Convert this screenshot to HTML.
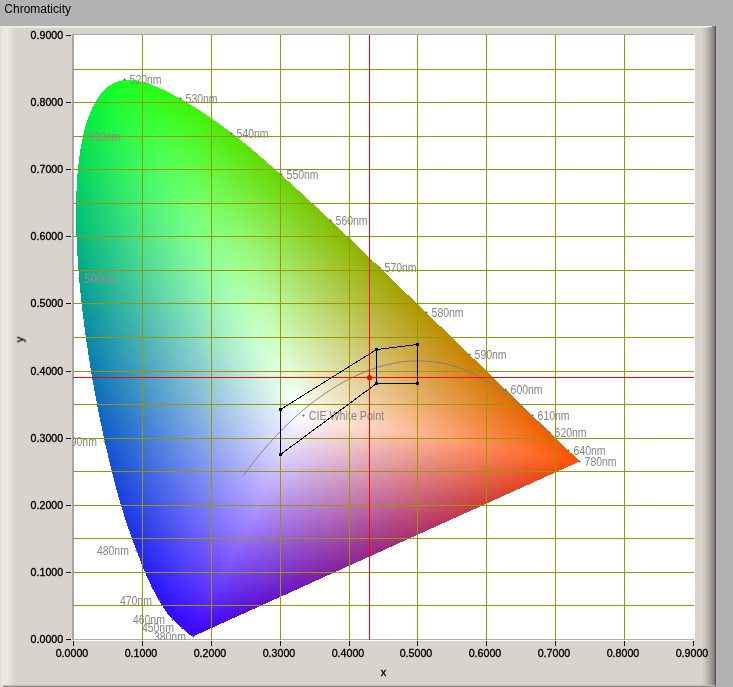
<!DOCTYPE html>
<html><head><meta charset="utf-8"><title>Chromaticity</title>
<style>html,body{margin:0;padding:0;background:#b2b2b2}body{width:733px;height:687px;overflow:hidden;position:relative;font-family:"Liberation Sans",sans-serif}</style></head>
<body>
<svg width="733" height="687" viewBox="0 0 733 687" style="position:absolute;left:0;top:0;display:block">
<defs>
<linearGradient id="gl" x1="0" x2="1" y1="0" y2="0"><stop offset="0" stop-color="#dcd8ce"/><stop offset="0.1" stop-color="#e9e5da"/><stop offset="0.25" stop-color="#ece8de"/><stop offset="0.55" stop-color="#ebe7de"/><stop offset="0.8" stop-color="#e2ded4"/><stop offset="1" stop-color="#d8d4cd"/></linearGradient>
<linearGradient id="gr" x1="0" x2="1" y1="0" y2="0"><stop offset="0" stop-color="#d8d4cd"/><stop offset="0.3" stop-color="#c2bfb8"/><stop offset="0.62" stop-color="#a3a099"/><stop offset="0.85" stop-color="#84827c"/><stop offset="0.93" stop-color="#6a6862"/><stop offset="1" stop-color="#4c4a46"/></linearGradient>
<linearGradient id="b0" gradientUnits="userSpaceOnUse" x1="305.42" y1="416.97" x2="300.84" y2="414.63"><stop offset="0" stop-color="#3c02fd"/><stop offset="1" stop-color="#3a03fe"/></linearGradient>
<linearGradient id="w0" gradientUnits="userSpaceOnUse" x1="303.13" y1="415.80" x2="200.08" y2="639.23"><stop offset="0" stop-color="#fff" stop-opacity="1"/><stop offset="1" stop-color="#fff" stop-opacity="0"/></linearGradient>
<linearGradient id="b1" gradientUnits="userSpaceOnUse" x1="305.29" y1="416.95" x2="300.97" y2="414.64"><stop offset="0" stop-color="#3a03fe"/><stop offset="1" stop-color="#3804ff"/></linearGradient>
<linearGradient id="w1" gradientUnits="userSpaceOnUse" x1="303.13" y1="415.80" x2="144.79" y2="595.20"><stop offset="0" stop-color="#fff" stop-opacity="1"/><stop offset="1" stop-color="#fff" stop-opacity="0"/></linearGradient>
<linearGradient id="b2" gradientUnits="userSpaceOnUse" x1="305.55" y1="417.16" x2="300.71" y2="414.43"><stop offset="0" stop-color="#3804ff"/><stop offset="1" stop-color="#3606ff"/></linearGradient>
<linearGradient id="w2" gradientUnits="userSpaceOnUse" x1="303.13" y1="415.80" x2="147.25" y2="598.47"><stop offset="0" stop-color="#fff" stop-opacity="1"/><stop offset="1" stop-color="#fff" stop-opacity="0"/></linearGradient>
<linearGradient id="b3" gradientUnits="userSpaceOnUse" x1="305.42" y1="417.16" x2="300.84" y2="414.43"><stop offset="0" stop-color="#3606ff"/><stop offset="1" stop-color="#3407ff"/></linearGradient>
<linearGradient id="w3" gradientUnits="userSpaceOnUse" x1="303.13" y1="415.80" x2="144.96" y2="595.57"><stop offset="0" stop-color="#fff" stop-opacity="1"/><stop offset="1" stop-color="#fff" stop-opacity="0"/></linearGradient>
<linearGradient id="b4" gradientUnits="userSpaceOnUse" x1="305.42" y1="417.22" x2="300.84" y2="414.37"><stop offset="0" stop-color="#3407ff"/><stop offset="1" stop-color="#3209ff"/></linearGradient>
<linearGradient id="w4" gradientUnits="userSpaceOnUse" x1="303.13" y1="415.80" x2="137.49" y2="585.16"><stop offset="0" stop-color="#fff" stop-opacity="1"/><stop offset="1" stop-color="#fff" stop-opacity="0"/></linearGradient>
<linearGradient id="b5" gradientUnits="userSpaceOnUse" x1="305.90" y1="417.62" x2="300.36" y2="413.97"><stop offset="0" stop-color="#3209ff"/><stop offset="1" stop-color="#300bff"/></linearGradient>
<linearGradient id="w5" gradientUnits="userSpaceOnUse" x1="303.13" y1="415.80" x2="128.51" y2="569.35"><stop offset="0" stop-color="#fff" stop-opacity="1"/><stop offset="1" stop-color="#fff" stop-opacity="0"/></linearGradient>
<linearGradient id="b6" gradientUnits="userSpaceOnUse" x1="305.85" y1="417.70" x2="300.41" y2="413.89"><stop offset="0" stop-color="#300bff"/><stop offset="1" stop-color="#2e0efe"/></linearGradient>
<linearGradient id="w6" gradientUnits="userSpaceOnUse" x1="303.13" y1="415.80" x2="120.31" y2="548.54"><stop offset="0" stop-color="#fff" stop-opacity="1"/><stop offset="1" stop-color="#fff" stop-opacity="0"/></linearGradient>
<linearGradient id="b7" gradientUnits="userSpaceOnUse" x1="305.39" y1="417.47" x2="300.87" y2="414.13"><stop offset="0" stop-color="#2e0efe"/><stop offset="1" stop-color="#2c10fd"/></linearGradient>
<linearGradient id="w7" gradientUnits="userSpaceOnUse" x1="303.13" y1="415.80" x2="116.84" y2="535.05"><stop offset="0" stop-color="#fff" stop-opacity="1"/><stop offset="1" stop-color="#fff" stop-opacity="0"/></linearGradient>
<linearGradient id="b8" gradientUnits="userSpaceOnUse" x1="305.73" y1="417.83" x2="300.53" y2="413.77"><stop offset="0" stop-color="#2c10fd"/><stop offset="1" stop-color="#2a13fc"/></linearGradient>
<linearGradient id="w8" gradientUnits="userSpaceOnUse" x1="303.13" y1="415.80" x2="115.11" y2="525.20"><stop offset="0" stop-color="#fff" stop-opacity="1"/><stop offset="1" stop-color="#fff" stop-opacity="0"/></linearGradient>
<linearGradient id="b9" gradientUnits="userSpaceOnUse" x1="306.10" y1="418.26" x2="300.16" y2="413.33"><stop offset="0" stop-color="#2a13fc"/><stop offset="1" stop-color="#2817fa"/></linearGradient>
<linearGradient id="w9" gradientUnits="userSpaceOnUse" x1="303.13" y1="415.80" x2="113.98" y2="515.78"><stop offset="0" stop-color="#fff" stop-opacity="1"/><stop offset="1" stop-color="#fff" stop-opacity="0"/></linearGradient>
<linearGradient id="b10" gradientUnits="userSpaceOnUse" x1="306.53" y1="418.84" x2="299.73" y2="412.75"><stop offset="0" stop-color="#2817fa"/><stop offset="1" stop-color="#261bf8"/></linearGradient>
<linearGradient id="w10" gradientUnits="userSpaceOnUse" x1="303.13" y1="415.80" x2="113.34" y2="507.07"><stop offset="0" stop-color="#fff" stop-opacity="1"/><stop offset="1" stop-color="#fff" stop-opacity="0"/></linearGradient>
<linearGradient id="b11" gradientUnits="userSpaceOnUse" x1="305.01" y1="417.59" x2="301.25" y2="414.00"><stop offset="0" stop-color="#261bf8"/><stop offset="1" stop-color="#251df7"/></linearGradient>
<linearGradient id="w11" gradientUnits="userSpaceOnUse" x1="303.13" y1="415.80" x2="113.04" y2="500.90"><stop offset="0" stop-color="#fff" stop-opacity="1"/><stop offset="1" stop-color="#fff" stop-opacity="0"/></linearGradient>
<linearGradient id="b12" gradientUnits="userSpaceOnUse" x1="305.13" y1="417.80" x2="301.12" y2="413.79"><stop offset="0" stop-color="#251df7"/><stop offset="1" stop-color="#241ff5"/></linearGradient>
<linearGradient id="w12" gradientUnits="userSpaceOnUse" x1="303.13" y1="415.80" x2="112.93" y2="497.01"><stop offset="0" stop-color="#fff" stop-opacity="1"/><stop offset="1" stop-color="#fff" stop-opacity="0"/></linearGradient>
<linearGradient id="b13" gradientUnits="userSpaceOnUse" x1="305.26" y1="418.04" x2="301.00" y2="413.55"><stop offset="0" stop-color="#241ff5"/><stop offset="1" stop-color="#2222f3"/></linearGradient>
<linearGradient id="w13" gradientUnits="userSpaceOnUse" x1="303.13" y1="415.80" x2="112.87" y2="493.72"><stop offset="0" stop-color="#fff" stop-opacity="1"/><stop offset="1" stop-color="#fff" stop-opacity="0"/></linearGradient>
<linearGradient id="b14" gradientUnits="userSpaceOnUse" x1="305.37" y1="418.31" x2="300.89" y2="413.29"><stop offset="0" stop-color="#2222f3"/><stop offset="1" stop-color="#2125f2"/></linearGradient>
<linearGradient id="w14" gradientUnits="userSpaceOnUse" x1="303.13" y1="415.80" x2="112.81" y2="490.96"><stop offset="0" stop-color="#fff" stop-opacity="1"/><stop offset="1" stop-color="#fff" stop-opacity="0"/></linearGradient>
<linearGradient id="b15" gradientUnits="userSpaceOnUse" x1="305.47" y1="418.60" x2="300.78" y2="412.99"><stop offset="0" stop-color="#2125f2"/><stop offset="1" stop-color="#2029ef"/></linearGradient>
<linearGradient id="w15" gradientUnits="userSpaceOnUse" x1="303.13" y1="415.80" x2="112.75" y2="488.66"><stop offset="0" stop-color="#fff" stop-opacity="1"/><stop offset="1" stop-color="#fff" stop-opacity="0"/></linearGradient>
<linearGradient id="b16" gradientUnits="userSpaceOnUse" x1="305.56" y1="418.93" x2="300.69" y2="412.66"><stop offset="0" stop-color="#2029ef"/><stop offset="1" stop-color="#1e2ced"/></linearGradient>
<linearGradient id="w16" gradientUnits="userSpaceOnUse" x1="303.13" y1="415.80" x2="112.66" y2="486.68"><stop offset="0" stop-color="#fff" stop-opacity="1"/><stop offset="1" stop-color="#fff" stop-opacity="0"/></linearGradient>
<linearGradient id="b17" gradientUnits="userSpaceOnUse" x1="305.64" y1="419.30" x2="300.62" y2="412.30"><stop offset="0" stop-color="#1e2ced"/><stop offset="1" stop-color="#1d30eb"/></linearGradient>
<linearGradient id="w17" gradientUnits="userSpaceOnUse" x1="303.13" y1="415.80" x2="112.53" y2="484.44"><stop offset="0" stop-color="#fff" stop-opacity="1"/><stop offset="1" stop-color="#fff" stop-opacity="0"/></linearGradient>
<linearGradient id="b18" gradientUnits="userSpaceOnUse" x1="305.68" y1="419.70" x2="300.58" y2="411.89"><stop offset="0" stop-color="#1d30eb"/><stop offset="1" stop-color="#1b34e8"/></linearGradient>
<linearGradient id="w18" gradientUnits="userSpaceOnUse" x1="303.13" y1="415.80" x2="112.32" y2="481.74"><stop offset="0" stop-color="#fff" stop-opacity="1"/><stop offset="1" stop-color="#fff" stop-opacity="0"/></linearGradient>
<linearGradient id="b19" gradientUnits="userSpaceOnUse" x1="305.69" y1="420.14" x2="300.57" y2="411.45"><stop offset="0" stop-color="#1b34e8"/><stop offset="1" stop-color="#1939e5"/></linearGradient>
<linearGradient id="w19" gradientUnits="userSpaceOnUse" x1="303.13" y1="415.80" x2="112.02" y2="478.61"><stop offset="0" stop-color="#fff" stop-opacity="1"/><stop offset="1" stop-color="#fff" stop-opacity="0"/></linearGradient>
<linearGradient id="b20" gradientUnits="userSpaceOnUse" x1="305.64" y1="420.60" x2="300.62" y2="410.99"><stop offset="0" stop-color="#1939e5"/><stop offset="1" stop-color="#183de1"/></linearGradient>
<linearGradient id="w20" gradientUnits="userSpaceOnUse" x1="303.13" y1="415.80" x2="111.63" y2="475.07"><stop offset="0" stop-color="#fff" stop-opacity="1"/><stop offset="1" stop-color="#fff" stop-opacity="0"/></linearGradient>
<linearGradient id="b21" gradientUnits="userSpaceOnUse" x1="305.52" y1="421.07" x2="300.74" y2="410.53"><stop offset="0" stop-color="#183de1"/><stop offset="1" stop-color="#1643de"/></linearGradient>
<linearGradient id="w21" gradientUnits="userSpaceOnUse" x1="303.13" y1="415.80" x2="111.14" y2="471.26"><stop offset="0" stop-color="#fff" stop-opacity="1"/><stop offset="1" stop-color="#fff" stop-opacity="0"/></linearGradient>
<linearGradient id="b22" gradientUnits="userSpaceOnUse" x1="305.33" y1="421.54" x2="300.93" y2="410.05"><stop offset="0" stop-color="#1643de"/><stop offset="1" stop-color="#1548da"/></linearGradient>
<linearGradient id="w22" gradientUnits="userSpaceOnUse" x1="303.13" y1="415.80" x2="110.62" y2="467.76"><stop offset="0" stop-color="#fff" stop-opacity="1"/><stop offset="1" stop-color="#fff" stop-opacity="0"/></linearGradient>
<linearGradient id="b23" gradientUnits="userSpaceOnUse" x1="305.07" y1="422.01" x2="301.19" y2="409.58"><stop offset="0" stop-color="#1548da"/><stop offset="1" stop-color="#134ed5"/></linearGradient>
<linearGradient id="w23" gradientUnits="userSpaceOnUse" x1="303.13" y1="415.80" x2="110.08" y2="464.70"><stop offset="0" stop-color="#fff" stop-opacity="1"/><stop offset="1" stop-color="#fff" stop-opacity="0"/></linearGradient>
<linearGradient id="b24" gradientUnits="userSpaceOnUse" x1="304.73" y1="422.47" x2="301.53" y2="409.12"><stop offset="0" stop-color="#134ed5"/><stop offset="1" stop-color="#1154d1"/></linearGradient>
<linearGradient id="w24" gradientUnits="userSpaceOnUse" x1="303.13" y1="415.80" x2="109.51" y2="462.07"><stop offset="0" stop-color="#fff" stop-opacity="1"/><stop offset="1" stop-color="#fff" stop-opacity="0"/></linearGradient>
<linearGradient id="b25" gradientUnits="userSpaceOnUse" x1="304.31" y1="422.90" x2="301.95" y2="408.69"><stop offset="0" stop-color="#1154d1"/><stop offset="1" stop-color="#105acc"/></linearGradient>
<linearGradient id="w25" gradientUnits="userSpaceOnUse" x1="303.13" y1="415.80" x2="108.94" y2="459.90"><stop offset="0" stop-color="#fff" stop-opacity="1"/><stop offset="1" stop-color="#fff" stop-opacity="0"/></linearGradient>
<linearGradient id="b26" gradientUnits="userSpaceOnUse" x1="303.82" y1="423.26" x2="302.44" y2="408.33"><stop offset="0" stop-color="#105acc"/><stop offset="1" stop-color="#0e61c6"/></linearGradient>
<linearGradient id="w26" gradientUnits="userSpaceOnUse" x1="303.13" y1="415.80" x2="108.31" y2="457.91"><stop offset="0" stop-color="#fff" stop-opacity="1"/><stop offset="1" stop-color="#fff" stop-opacity="0"/></linearGradient>
<linearGradient id="b27" gradientUnits="userSpaceOnUse" x1="303.25" y1="423.51" x2="303.00" y2="408.08"><stop offset="0" stop-color="#0e61c6"/><stop offset="1" stop-color="#0d68c0"/></linearGradient>
<linearGradient id="w27" gradientUnits="userSpaceOnUse" x1="303.13" y1="415.80" x2="107.50" y2="455.77"><stop offset="0" stop-color="#fff" stop-opacity="1"/><stop offset="1" stop-color="#fff" stop-opacity="0"/></linearGradient>
<linearGradient id="b28" gradientUnits="userSpaceOnUse" x1="302.66" y1="423.63" x2="303.60" y2="407.96"><stop offset="0" stop-color="#0d68c0"/><stop offset="1" stop-color="#0b6fbb"/></linearGradient>
<linearGradient id="w28" gradientUnits="userSpaceOnUse" x1="303.13" y1="415.80" x2="106.55" y2="453.59"><stop offset="0" stop-color="#fff" stop-opacity="1"/><stop offset="1" stop-color="#fff" stop-opacity="0"/></linearGradient>
<linearGradient id="b29" gradientUnits="userSpaceOnUse" x1="302.07" y1="423.61" x2="304.19" y2="407.98"><stop offset="0" stop-color="#0b6fbb"/><stop offset="1" stop-color="#0a77b4"/></linearGradient>
<linearGradient id="w29" gradientUnits="userSpaceOnUse" x1="303.13" y1="415.80" x2="105.43" y2="451.36"><stop offset="0" stop-color="#fff" stop-opacity="1"/><stop offset="1" stop-color="#fff" stop-opacity="0"/></linearGradient>
<linearGradient id="b30" gradientUnits="userSpaceOnUse" x1="301.50" y1="423.47" x2="304.76" y2="408.12"><stop offset="0" stop-color="#0a77b4"/><stop offset="1" stop-color="#087eae"/></linearGradient>
<linearGradient id="w30" gradientUnits="userSpaceOnUse" x1="303.13" y1="415.80" x2="104.12" y2="449.05"><stop offset="0" stop-color="#fff" stop-opacity="1"/><stop offset="1" stop-color="#fff" stop-opacity="0"/></linearGradient>
<linearGradient id="b31" gradientUnits="userSpaceOnUse" x1="301.00" y1="423.22" x2="305.26" y2="408.37"><stop offset="0" stop-color="#087eae"/><stop offset="1" stop-color="#0786a7"/></linearGradient>
<linearGradient id="w31" gradientUnits="userSpaceOnUse" x1="303.13" y1="415.80" x2="102.60" y2="446.65"><stop offset="0" stop-color="#fff" stop-opacity="1"/><stop offset="1" stop-color="#fff" stop-opacity="0"/></linearGradient>
<linearGradient id="b32" gradientUnits="userSpaceOnUse" x1="300.56" y1="422.90" x2="305.70" y2="408.70"><stop offset="0" stop-color="#0786a7"/><stop offset="1" stop-color="#068ea1"/></linearGradient>
<linearGradient id="w32" gradientUnits="userSpaceOnUse" x1="303.13" y1="415.80" x2="100.85" y2="444.11"><stop offset="0" stop-color="#fff" stop-opacity="1"/><stop offset="1" stop-color="#fff" stop-opacity="0"/></linearGradient>
<linearGradient id="b33" gradientUnits="userSpaceOnUse" x1="300.20" y1="422.53" x2="306.06" y2="409.06"><stop offset="0" stop-color="#068ea1"/><stop offset="1" stop-color="#05959a"/></linearGradient>
<linearGradient id="w33" gradientUnits="userSpaceOnUse" x1="303.13" y1="415.80" x2="98.83" y2="441.42"><stop offset="0" stop-color="#fff" stop-opacity="1"/><stop offset="1" stop-color="#fff" stop-opacity="0"/></linearGradient>
<linearGradient id="b34" gradientUnits="userSpaceOnUse" x1="299.91" y1="422.14" x2="306.35" y2="409.45"><stop offset="0" stop-color="#05959a"/><stop offset="1" stop-color="#049d93"/></linearGradient>
<linearGradient id="w34" gradientUnits="userSpaceOnUse" x1="303.13" y1="415.80" x2="96.56" y2="438.58"><stop offset="0" stop-color="#fff" stop-opacity="1"/><stop offset="1" stop-color="#fff" stop-opacity="0"/></linearGradient>
<linearGradient id="b35" gradientUnits="userSpaceOnUse" x1="299.69" y1="421.74" x2="306.57" y2="409.85"><stop offset="0" stop-color="#049d93"/><stop offset="1" stop-color="#03a58c"/></linearGradient>
<linearGradient id="w35" gradientUnits="userSpaceOnUse" x1="303.13" y1="415.80" x2="94.03" y2="435.59"><stop offset="0" stop-color="#fff" stop-opacity="1"/><stop offset="1" stop-color="#fff" stop-opacity="0"/></linearGradient>
<linearGradient id="b36" gradientUnits="userSpaceOnUse" x1="299.54" y1="421.32" x2="306.71" y2="410.28"><stop offset="0" stop-color="#03a58c"/><stop offset="1" stop-color="#02ac85"/></linearGradient>
<linearGradient id="w36" gradientUnits="userSpaceOnUse" x1="303.13" y1="415.80" x2="91.23" y2="432.42"><stop offset="0" stop-color="#fff" stop-opacity="1"/><stop offset="1" stop-color="#fff" stop-opacity="0"/></linearGradient>
<linearGradient id="b37" gradientUnits="userSpaceOnUse" x1="299.47" y1="420.89" x2="306.79" y2="410.70"><stop offset="0" stop-color="#02ac85"/><stop offset="1" stop-color="#02b47e"/></linearGradient>
<linearGradient id="w37" gradientUnits="userSpaceOnUse" x1="303.13" y1="415.80" x2="87.88" y2="428.75"><stop offset="0" stop-color="#fff" stop-opacity="1"/><stop offset="1" stop-color="#fff" stop-opacity="0"/></linearGradient>
<linearGradient id="b38" gradientUnits="userSpaceOnUse" x1="299.44" y1="420.48" x2="306.82" y2="411.11"><stop offset="0" stop-color="#02b47e"/><stop offset="1" stop-color="#01bb77"/></linearGradient>
<linearGradient id="w38" gradientUnits="userSpaceOnUse" x1="303.13" y1="415.80" x2="83.89" y2="424.41"><stop offset="0" stop-color="#fff" stop-opacity="1"/><stop offset="1" stop-color="#fff" stop-opacity="0"/></linearGradient>
<linearGradient id="b39" gradientUnits="userSpaceOnUse" x1="299.44" y1="420.12" x2="306.82" y2="411.47"><stop offset="0" stop-color="#01bb77"/><stop offset="1" stop-color="#01c270"/></linearGradient>
<linearGradient id="w39" gradientUnits="userSpaceOnUse" x1="303.13" y1="415.80" x2="79.23" y2="419.32"><stop offset="0" stop-color="#fff" stop-opacity="1"/><stop offset="1" stop-color="#fff" stop-opacity="0"/></linearGradient>
<linearGradient id="b40" gradientUnits="userSpaceOnUse" x1="299.45" y1="419.81" x2="306.81" y2="411.79"><stop offset="0" stop-color="#01c270"/><stop offset="1" stop-color="#01c869"/></linearGradient>
<linearGradient id="w40" gradientUnits="userSpaceOnUse" x1="303.13" y1="415.80" x2="73.93" y2="413.40"><stop offset="0" stop-color="#fff" stop-opacity="1"/><stop offset="1" stop-color="#fff" stop-opacity="0"/></linearGradient>
<linearGradient id="b41" gradientUnits="userSpaceOnUse" x1="299.46" y1="419.53" x2="306.80" y2="412.06"><stop offset="0" stop-color="#01c869"/><stop offset="1" stop-color="#02cf63"/></linearGradient>
<linearGradient id="w41" gradientUnits="userSpaceOnUse" x1="303.13" y1="415.80" x2="68.23" y2="406.79"><stop offset="0" stop-color="#fff" stop-opacity="1"/><stop offset="1" stop-color="#fff" stop-opacity="0"/></linearGradient>
<linearGradient id="b42" gradientUnits="userSpaceOnUse" x1="299.49" y1="419.27" x2="306.76" y2="412.33"><stop offset="0" stop-color="#02cf63"/><stop offset="1" stop-color="#02d55c"/></linearGradient>
<linearGradient id="w42" gradientUnits="userSpaceOnUse" x1="303.13" y1="415.80" x2="61.93" y2="399.08"><stop offset="0" stop-color="#fff" stop-opacity="1"/><stop offset="1" stop-color="#fff" stop-opacity="0"/></linearGradient>
<linearGradient id="b43" gradientUnits="userSpaceOnUse" x1="299.55" y1="419.02" x2="306.71" y2="412.57"><stop offset="0" stop-color="#02d55c"/><stop offset="1" stop-color="#03db55"/></linearGradient>
<linearGradient id="w43" gradientUnits="userSpaceOnUse" x1="303.13" y1="415.80" x2="54.70" y2="389.56"><stop offset="0" stop-color="#fff" stop-opacity="1"/><stop offset="1" stop-color="#fff" stop-opacity="0"/></linearGradient>
<linearGradient id="b44" gradientUnits="userSpaceOnUse" x1="299.61" y1="418.79" x2="306.64" y2="412.81"><stop offset="0" stop-color="#03db55"/><stop offset="1" stop-color="#04e04f"/></linearGradient>
<linearGradient id="w44" gradientUnits="userSpaceOnUse" x1="303.13" y1="415.80" x2="46.58" y2="377.69"><stop offset="0" stop-color="#fff" stop-opacity="1"/><stop offset="1" stop-color="#fff" stop-opacity="0"/></linearGradient>
<linearGradient id="b45" gradientUnits="userSpaceOnUse" x1="299.70" y1="418.57" x2="306.56" y2="413.03"><stop offset="0" stop-color="#04e04f"/><stop offset="1" stop-color="#05e549"/></linearGradient>
<linearGradient id="w45" gradientUnits="userSpaceOnUse" x1="303.13" y1="415.80" x2="37.73" y2="362.74"><stop offset="0" stop-color="#fff" stop-opacity="1"/><stop offset="1" stop-color="#fff" stop-opacity="0"/></linearGradient>
<linearGradient id="b46" gradientUnits="userSpaceOnUse" x1="299.79" y1="418.36" x2="306.47" y2="413.23"><stop offset="0" stop-color="#05e549"/><stop offset="1" stop-color="#06ea43"/></linearGradient>
<linearGradient id="w46" gradientUnits="userSpaceOnUse" x1="303.13" y1="415.80" x2="28.96" y2="344.72"><stop offset="0" stop-color="#fff" stop-opacity="1"/><stop offset="1" stop-color="#fff" stop-opacity="0"/></linearGradient>
<linearGradient id="b47" gradientUnits="userSpaceOnUse" x1="299.88" y1="418.17" x2="306.38" y2="413.42"><stop offset="0" stop-color="#06ea43"/><stop offset="1" stop-color="#08ee3d"/></linearGradient>
<linearGradient id="w47" gradientUnits="userSpaceOnUse" x1="303.13" y1="415.80" x2="20.95" y2="323.26"><stop offset="0" stop-color="#fff" stop-opacity="1"/><stop offset="1" stop-color="#fff" stop-opacity="0"/></linearGradient>
<linearGradient id="b48" gradientUnits="userSpaceOnUse" x1="300.00" y1="417.99" x2="306.26" y2="413.61"><stop offset="0" stop-color="#08ee3d"/><stop offset="1" stop-color="#09f238"/></linearGradient>
<linearGradient id="w48" gradientUnits="userSpaceOnUse" x1="303.13" y1="415.80" x2="14.33" y2="296.28"><stop offset="0" stop-color="#fff" stop-opacity="1"/><stop offset="1" stop-color="#fff" stop-opacity="0"/></linearGradient>
<linearGradient id="b49" gradientUnits="userSpaceOnUse" x1="300.13" y1="417.81" x2="306.13" y2="413.79"><stop offset="0" stop-color="#09f238"/><stop offset="1" stop-color="#0bf633"/></linearGradient>
<linearGradient id="w49" gradientUnits="userSpaceOnUse" x1="303.13" y1="415.80" x2="11.13" y2="262.16"><stop offset="0" stop-color="#fff" stop-opacity="1"/><stop offset="1" stop-color="#fff" stop-opacity="0"/></linearGradient>
<linearGradient id="b50" gradientUnits="userSpaceOnUse" x1="300.27" y1="417.64" x2="305.99" y2="413.96"><stop offset="0" stop-color="#0bf633"/><stop offset="1" stop-color="#0df82e"/></linearGradient>
<linearGradient id="w50" gradientUnits="userSpaceOnUse" x1="303.13" y1="415.80" x2="15.08" y2="219.62"><stop offset="0" stop-color="#fff" stop-opacity="1"/><stop offset="1" stop-color="#fff" stop-opacity="0"/></linearGradient>
<linearGradient id="b51" gradientUnits="userSpaceOnUse" x1="300.41" y1="417.48" x2="305.85" y2="414.11"><stop offset="0" stop-color="#0df82e"/><stop offset="1" stop-color="#10fb2a"/></linearGradient>
<linearGradient id="w51" gradientUnits="userSpaceOnUse" x1="303.13" y1="415.80" x2="31.44" y2="170.89"><stop offset="0" stop-color="#fff" stop-opacity="1"/><stop offset="1" stop-color="#fff" stop-opacity="0"/></linearGradient>
<linearGradient id="b52" gradientUnits="userSpaceOnUse" x1="300.54" y1="417.34" x2="305.72" y2="414.25"><stop offset="0" stop-color="#10fb2a"/><stop offset="1" stop-color="#12fc26"/></linearGradient>
<linearGradient id="w52" gradientUnits="userSpaceOnUse" x1="303.13" y1="415.80" x2="63.24" y2="123.66"><stop offset="0" stop-color="#fff" stop-opacity="1"/><stop offset="1" stop-color="#fff" stop-opacity="0"/></linearGradient>
<linearGradient id="b53" gradientUnits="userSpaceOnUse" x1="300.66" y1="417.22" x2="305.60" y2="414.37"><stop offset="0" stop-color="#12fc26"/><stop offset="1" stop-color="#15fe22"/></linearGradient>
<linearGradient id="w53" gradientUnits="userSpaceOnUse" x1="303.13" y1="415.80" x2="110.92" y2="84.87"><stop offset="0" stop-color="#fff" stop-opacity="1"/><stop offset="1" stop-color="#fff" stop-opacity="0"/></linearGradient>
<linearGradient id="b54" gradientUnits="userSpaceOnUse" x1="300.78" y1="417.11" x2="305.48" y2="414.49"><stop offset="0" stop-color="#15fe22"/><stop offset="1" stop-color="#17ff1f"/></linearGradient>
<linearGradient id="w54" gradientUnits="userSpaceOnUse" x1="303.13" y1="415.80" x2="170.26" y2="61.88"><stop offset="0" stop-color="#fff" stop-opacity="1"/><stop offset="1" stop-color="#fff" stop-opacity="0"/></linearGradient>
<linearGradient id="b55" gradientUnits="userSpaceOnUse" x1="300.89" y1="417.00" x2="305.37" y2="414.59"><stop offset="0" stop-color="#17ff1f"/><stop offset="1" stop-color="#1aff1c"/></linearGradient>
<linearGradient id="w55" gradientUnits="userSpaceOnUse" x1="303.13" y1="415.80" x2="232.99" y2="58.66"><stop offset="0" stop-color="#fff" stop-opacity="1"/><stop offset="1" stop-color="#fff" stop-opacity="0"/></linearGradient>
<linearGradient id="b56" gradientUnits="userSpaceOnUse" x1="300.99" y1="416.91" x2="305.27" y2="414.68"><stop offset="0" stop-color="#1aff1c"/><stop offset="1" stop-color="#1cff1a"/></linearGradient>
<linearGradient id="w56" gradientUnits="userSpaceOnUse" x1="303.13" y1="415.80" x2="290.79" y2="73.93"><stop offset="0" stop-color="#fff" stop-opacity="1"/><stop offset="1" stop-color="#fff" stop-opacity="0"/></linearGradient>
<linearGradient id="b57" gradientUnits="userSpaceOnUse" x1="301.08" y1="416.84" x2="305.18" y2="414.75"><stop offset="0" stop-color="#1cff1a"/><stop offset="1" stop-color="#1fff18"/></linearGradient>
<linearGradient id="w57" gradientUnits="userSpaceOnUse" x1="303.13" y1="415.80" x2="334.39" y2="99.96"><stop offset="0" stop-color="#fff" stop-opacity="1"/><stop offset="1" stop-color="#fff" stop-opacity="0"/></linearGradient>
<linearGradient id="b58" gradientUnits="userSpaceOnUse" x1="301.14" y1="416.78" x2="305.12" y2="414.82"><stop offset="0" stop-color="#1fff18"/><stop offset="1" stop-color="#22fe16"/></linearGradient>
<linearGradient id="w58" gradientUnits="userSpaceOnUse" x1="303.13" y1="415.80" x2="362.75" y2="127.23"><stop offset="0" stop-color="#fff" stop-opacity="1"/><stop offset="1" stop-color="#fff" stop-opacity="0"/></linearGradient>
<linearGradient id="b59" gradientUnits="userSpaceOnUse" x1="301.18" y1="416.73" x2="305.08" y2="414.86"><stop offset="0" stop-color="#22fe16"/><stop offset="1" stop-color="#25fe14"/></linearGradient>
<linearGradient id="w59" gradientUnits="userSpaceOnUse" x1="303.13" y1="415.80" x2="380.19" y2="151.04"><stop offset="0" stop-color="#fff" stop-opacity="1"/><stop offset="1" stop-color="#fff" stop-opacity="0"/></linearGradient>
<linearGradient id="b60" gradientUnits="userSpaceOnUse" x1="301.20" y1="416.69" x2="305.06" y2="414.90"><stop offset="0" stop-color="#25fe14"/><stop offset="1" stop-color="#28fd12"/></linearGradient>
<linearGradient id="w60" gradientUnits="userSpaceOnUse" x1="303.13" y1="415.80" x2="390.60" y2="169.82"><stop offset="0" stop-color="#fff" stop-opacity="1"/><stop offset="1" stop-color="#fff" stop-opacity="0"/></linearGradient>
<linearGradient id="b61" gradientUnits="userSpaceOnUse" x1="301.21" y1="416.66" x2="305.04" y2="414.94"><stop offset="0" stop-color="#28fd12"/><stop offset="1" stop-color="#2afc11"/></linearGradient>
<linearGradient id="w61" gradientUnits="userSpaceOnUse" x1="303.13" y1="415.80" x2="397.38" y2="185.31"><stop offset="0" stop-color="#fff" stop-opacity="1"/><stop offset="1" stop-color="#fff" stop-opacity="0"/></linearGradient>
<linearGradient id="b62" gradientUnits="userSpaceOnUse" x1="301.23" y1="416.62" x2="305.03" y2="414.97"><stop offset="0" stop-color="#2afc11"/><stop offset="1" stop-color="#2dfa10"/></linearGradient>
<linearGradient id="w62" gradientUnits="userSpaceOnUse" x1="303.13" y1="415.80" x2="402.16" y2="198.91"><stop offset="0" stop-color="#fff" stop-opacity="1"/><stop offset="1" stop-color="#fff" stop-opacity="0"/></linearGradient>
<linearGradient id="b63" gradientUnits="userSpaceOnUse" x1="301.24" y1="416.59" x2="305.02" y2="415.00"><stop offset="0" stop-color="#2dfa10"/><stop offset="1" stop-color="#30f90e"/></linearGradient>
<linearGradient id="w63" gradientUnits="userSpaceOnUse" x1="303.13" y1="415.80" x2="405.28" y2="209.88"><stop offset="0" stop-color="#fff" stop-opacity="1"/><stop offset="1" stop-color="#fff" stop-opacity="0"/></linearGradient>
<linearGradient id="b64" gradientUnits="userSpaceOnUse" x1="301.26" y1="416.56" x2="305.00" y2="415.03"><stop offset="0" stop-color="#30f90e"/><stop offset="1" stop-color="#33f80d"/></linearGradient>
<linearGradient id="w64" gradientUnits="userSpaceOnUse" x1="303.13" y1="415.80" x2="407.34" y2="218.67"><stop offset="0" stop-color="#fff" stop-opacity="1"/><stop offset="1" stop-color="#fff" stop-opacity="0"/></linearGradient>
<linearGradient id="b65" gradientUnits="userSpaceOnUse" x1="301.28" y1="416.53" x2="304.98" y2="415.07"><stop offset="0" stop-color="#33f80d"/><stop offset="1" stop-color="#36f60c"/></linearGradient>
<linearGradient id="w65" gradientUnits="userSpaceOnUse" x1="303.13" y1="415.80" x2="408.73" y2="225.64"><stop offset="0" stop-color="#fff" stop-opacity="1"/><stop offset="1" stop-color="#fff" stop-opacity="0"/></linearGradient>
<linearGradient id="b66" gradientUnits="userSpaceOnUse" x1="301.30" y1="416.50" x2="304.96" y2="415.10"><stop offset="0" stop-color="#36f60c"/><stop offset="1" stop-color="#38f50b"/></linearGradient>
<linearGradient id="w66" gradientUnits="userSpaceOnUse" x1="303.13" y1="415.80" x2="409.66" y2="231.06"><stop offset="0" stop-color="#fff" stop-opacity="1"/><stop offset="1" stop-color="#fff" stop-opacity="0"/></linearGradient>
<linearGradient id="b67" gradientUnits="userSpaceOnUse" x1="301.31" y1="416.47" x2="304.95" y2="415.13"><stop offset="0" stop-color="#38f50b"/><stop offset="1" stop-color="#3bf40a"/></linearGradient>
<linearGradient id="w67" gradientUnits="userSpaceOnUse" x1="303.13" y1="415.80" x2="410.42" y2="236.08"><stop offset="0" stop-color="#fff" stop-opacity="1"/><stop offset="1" stop-color="#fff" stop-opacity="0"/></linearGradient>
<linearGradient id="b68" gradientUnits="userSpaceOnUse" x1="301.31" y1="416.44" x2="304.95" y2="415.15"><stop offset="0" stop-color="#3bf40a"/><stop offset="1" stop-color="#3ef209"/></linearGradient>
<linearGradient id="w68" gradientUnits="userSpaceOnUse" x1="303.13" y1="415.80" x2="411.10" y2="241.19"><stop offset="0" stop-color="#fff" stop-opacity="1"/><stop offset="1" stop-color="#fff" stop-opacity="0"/></linearGradient>
<linearGradient id="b69" gradientUnits="userSpaceOnUse" x1="301.31" y1="416.42" x2="304.95" y2="415.18"><stop offset="0" stop-color="#3ef209"/><stop offset="1" stop-color="#40f109"/></linearGradient>
<linearGradient id="w69" gradientUnits="userSpaceOnUse" x1="303.13" y1="415.80" x2="411.68" y2="246.34"><stop offset="0" stop-color="#fff" stop-opacity="1"/><stop offset="1" stop-color="#fff" stop-opacity="0"/></linearGradient>
<linearGradient id="b70" gradientUnits="userSpaceOnUse" x1="301.31" y1="416.39" x2="304.95" y2="415.20"><stop offset="0" stop-color="#40f109"/><stop offset="1" stop-color="#43ef08"/></linearGradient>
<linearGradient id="w70" gradientUnits="userSpaceOnUse" x1="303.13" y1="415.80" x2="412.16" y2="251.49"><stop offset="0" stop-color="#fff" stop-opacity="1"/><stop offset="1" stop-color="#fff" stop-opacity="0"/></linearGradient>
<linearGradient id="b71" gradientUnits="userSpaceOnUse" x1="301.30" y1="416.37" x2="304.96" y2="415.22"><stop offset="0" stop-color="#43ef08"/><stop offset="1" stop-color="#46ed07"/></linearGradient>
<linearGradient id="w71" gradientUnits="userSpaceOnUse" x1="303.13" y1="415.80" x2="412.50" y2="256.24"><stop offset="0" stop-color="#fff" stop-opacity="1"/><stop offset="1" stop-color="#fff" stop-opacity="0"/></linearGradient>
<linearGradient id="b72" gradientUnits="userSpaceOnUse" x1="301.29" y1="416.35" x2="304.96" y2="415.24"><stop offset="0" stop-color="#46ed07"/><stop offset="1" stop-color="#48ec07"/></linearGradient>
<linearGradient id="w72" gradientUnits="userSpaceOnUse" x1="303.13" y1="415.80" x2="412.74" y2="260.41"><stop offset="0" stop-color="#fff" stop-opacity="1"/><stop offset="1" stop-color="#fff" stop-opacity="0"/></linearGradient>
<linearGradient id="b73" gradientUnits="userSpaceOnUse" x1="301.28" y1="416.33" x2="304.98" y2="415.26"><stop offset="0" stop-color="#48ec07"/><stop offset="1" stop-color="#4bea06"/></linearGradient>
<linearGradient id="w73" gradientUnits="userSpaceOnUse" x1="303.13" y1="415.80" x2="412.91" y2="264.31"><stop offset="0" stop-color="#fff" stop-opacity="1"/><stop offset="1" stop-color="#fff" stop-opacity="0"/></linearGradient>
<linearGradient id="b74" gradientUnits="userSpaceOnUse" x1="301.27" y1="416.31" x2="304.99" y2="415.29"><stop offset="0" stop-color="#4bea06"/><stop offset="1" stop-color="#4de805"/></linearGradient>
<linearGradient id="w74" gradientUnits="userSpaceOnUse" x1="303.13" y1="415.80" x2="413.02" y2="267.96"><stop offset="0" stop-color="#fff" stop-opacity="1"/><stop offset="1" stop-color="#fff" stop-opacity="0"/></linearGradient>
<linearGradient id="b75" gradientUnits="userSpaceOnUse" x1="301.24" y1="416.29" x2="305.01" y2="415.31"><stop offset="0" stop-color="#4de805"/><stop offset="1" stop-color="#50e705"/></linearGradient>
<linearGradient id="w75" gradientUnits="userSpaceOnUse" x1="303.13" y1="415.80" x2="413.09" y2="271.35"><stop offset="0" stop-color="#fff" stop-opacity="1"/><stop offset="1" stop-color="#fff" stop-opacity="0"/></linearGradient>
<linearGradient id="b76" gradientUnits="userSpaceOnUse" x1="301.22" y1="416.27" x2="305.04" y2="415.33"><stop offset="0" stop-color="#50e705"/><stop offset="1" stop-color="#52e505"/></linearGradient>
<linearGradient id="w76" gradientUnits="userSpaceOnUse" x1="303.13" y1="415.80" x2="413.12" y2="274.49"><stop offset="0" stop-color="#fff" stop-opacity="1"/><stop offset="1" stop-color="#fff" stop-opacity="0"/></linearGradient>
<linearGradient id="b77" gradientUnits="userSpaceOnUse" x1="301.19" y1="416.24" x2="305.06" y2="415.35"><stop offset="0" stop-color="#52e505"/><stop offset="1" stop-color="#55e304"/></linearGradient>
<linearGradient id="w77" gradientUnits="userSpaceOnUse" x1="303.13" y1="415.80" x2="413.13" y2="277.33"><stop offset="0" stop-color="#fff" stop-opacity="1"/><stop offset="1" stop-color="#fff" stop-opacity="0"/></linearGradient>
<linearGradient id="b78" gradientUnits="userSpaceOnUse" x1="301.17" y1="416.22" x2="305.09" y2="415.37"><stop offset="0" stop-color="#55e304"/><stop offset="1" stop-color="#57e104"/></linearGradient>
<linearGradient id="w78" gradientUnits="userSpaceOnUse" x1="303.13" y1="415.80" x2="413.13" y2="279.91"><stop offset="0" stop-color="#fff" stop-opacity="1"/><stop offset="1" stop-color="#fff" stop-opacity="0"/></linearGradient>
<linearGradient id="b79" gradientUnits="userSpaceOnUse" x1="301.14" y1="416.20" x2="305.12" y2="415.40"><stop offset="0" stop-color="#57e104"/><stop offset="1" stop-color="#5adf03"/></linearGradient>
<linearGradient id="w79" gradientUnits="userSpaceOnUse" x1="303.13" y1="415.80" x2="413.12" y2="282.25"><stop offset="0" stop-color="#fff" stop-opacity="1"/><stop offset="1" stop-color="#fff" stop-opacity="0"/></linearGradient>
<linearGradient id="b80" gradientUnits="userSpaceOnUse" x1="301.10" y1="416.17" x2="305.15" y2="415.42"><stop offset="0" stop-color="#5adf03"/><stop offset="1" stop-color="#5cde03"/></linearGradient>
<linearGradient id="w80" gradientUnits="userSpaceOnUse" x1="303.13" y1="415.80" x2="413.11" y2="284.38"><stop offset="0" stop-color="#fff" stop-opacity="1"/><stop offset="1" stop-color="#fff" stop-opacity="0"/></linearGradient>
<linearGradient id="b81" gradientUnits="userSpaceOnUse" x1="301.07" y1="416.14" x2="305.19" y2="415.45"><stop offset="0" stop-color="#5cde03"/><stop offset="1" stop-color="#5fdc03"/></linearGradient>
<linearGradient id="w81" gradientUnits="userSpaceOnUse" x1="303.13" y1="415.80" x2="413.10" y2="286.32"><stop offset="0" stop-color="#fff" stop-opacity="1"/><stop offset="1" stop-color="#fff" stop-opacity="0"/></linearGradient>
<linearGradient id="b82" gradientUnits="userSpaceOnUse" x1="301.03" y1="416.12" x2="305.23" y2="415.48"><stop offset="0" stop-color="#5fdc03"/><stop offset="1" stop-color="#61da03"/></linearGradient>
<linearGradient id="w82" gradientUnits="userSpaceOnUse" x1="303.13" y1="415.80" x2="413.09" y2="288.07"><stop offset="0" stop-color="#fff" stop-opacity="1"/><stop offset="1" stop-color="#fff" stop-opacity="0"/></linearGradient>
<linearGradient id="b83" gradientUnits="userSpaceOnUse" x1="300.99" y1="416.09" x2="305.27" y2="415.51"><stop offset="0" stop-color="#61da03"/><stop offset="1" stop-color="#64d802"/></linearGradient>
<linearGradient id="w83" gradientUnits="userSpaceOnUse" x1="303.13" y1="415.80" x2="413.09" y2="289.63"><stop offset="0" stop-color="#fff" stop-opacity="1"/><stop offset="1" stop-color="#fff" stop-opacity="0"/></linearGradient>
<linearGradient id="b84" gradientUnits="userSpaceOnUse" x1="300.95" y1="416.05" x2="305.31" y2="415.54"><stop offset="0" stop-color="#64d802"/><stop offset="1" stop-color="#66d602"/></linearGradient>
<linearGradient id="w84" gradientUnits="userSpaceOnUse" x1="303.13" y1="415.80" x2="413.10" y2="291.00"><stop offset="0" stop-color="#fff" stop-opacity="1"/><stop offset="1" stop-color="#fff" stop-opacity="0"/></linearGradient>
<linearGradient id="b85" gradientUnits="userSpaceOnUse" x1="300.91" y1="416.02" x2="305.35" y2="415.57"><stop offset="0" stop-color="#66d602"/><stop offset="1" stop-color="#69d402"/></linearGradient>
<linearGradient id="w85" gradientUnits="userSpaceOnUse" x1="303.13" y1="415.80" x2="413.11" y2="292.20"><stop offset="0" stop-color="#fff" stop-opacity="1"/><stop offset="1" stop-color="#fff" stop-opacity="0"/></linearGradient>
<linearGradient id="b86" gradientUnits="userSpaceOnUse" x1="300.86" y1="415.98" x2="305.40" y2="415.61"><stop offset="0" stop-color="#69d402"/><stop offset="1" stop-color="#6bd202"/></linearGradient>
<linearGradient id="w86" gradientUnits="userSpaceOnUse" x1="303.13" y1="415.80" x2="413.13" y2="293.28"><stop offset="0" stop-color="#fff" stop-opacity="1"/><stop offset="1" stop-color="#fff" stop-opacity="0"/></linearGradient>
<linearGradient id="b87" gradientUnits="userSpaceOnUse" x1="300.81" y1="415.94" x2="305.45" y2="415.65"><stop offset="0" stop-color="#6bd202"/><stop offset="1" stop-color="#6ed002"/></linearGradient>
<linearGradient id="w87" gradientUnits="userSpaceOnUse" x1="303.13" y1="415.80" x2="413.16" y2="294.25"><stop offset="0" stop-color="#fff" stop-opacity="1"/><stop offset="1" stop-color="#fff" stop-opacity="0"/></linearGradient>
<linearGradient id="b88" gradientUnits="userSpaceOnUse" x1="300.76" y1="415.89" x2="305.50" y2="415.70"><stop offset="0" stop-color="#6ed002"/><stop offset="1" stop-color="#70ce01"/></linearGradient>
<linearGradient id="w88" gradientUnits="userSpaceOnUse" x1="303.13" y1="415.80" x2="413.20" y2="295.12"><stop offset="0" stop-color="#fff" stop-opacity="1"/><stop offset="1" stop-color="#fff" stop-opacity="0"/></linearGradient>
<linearGradient id="b89" gradientUnits="userSpaceOnUse" x1="300.71" y1="415.85" x2="305.54" y2="415.75"><stop offset="0" stop-color="#70ce01"/><stop offset="1" stop-color="#73cc01"/></linearGradient>
<linearGradient id="w89" gradientUnits="userSpaceOnUse" x1="303.13" y1="415.80" x2="413.25" y2="295.89"><stop offset="0" stop-color="#fff" stop-opacity="1"/><stop offset="1" stop-color="#fff" stop-opacity="0"/></linearGradient>
<linearGradient id="b90" gradientUnits="userSpaceOnUse" x1="300.66" y1="415.79" x2="305.59" y2="415.80"><stop offset="0" stop-color="#73cc01"/><stop offset="1" stop-color="#75c901"/></linearGradient>
<linearGradient id="w90" gradientUnits="userSpaceOnUse" x1="303.13" y1="415.80" x2="413.30" y2="296.57"><stop offset="0" stop-color="#fff" stop-opacity="1"/><stop offset="1" stop-color="#fff" stop-opacity="0"/></linearGradient>
<linearGradient id="b91" gradientUnits="userSpaceOnUse" x1="300.61" y1="415.74" x2="305.65" y2="415.86"><stop offset="0" stop-color="#75c901"/><stop offset="1" stop-color="#78c701"/></linearGradient>
<linearGradient id="w91" gradientUnits="userSpaceOnUse" x1="303.13" y1="415.80" x2="413.35" y2="297.18"><stop offset="0" stop-color="#fff" stop-opacity="1"/><stop offset="1" stop-color="#fff" stop-opacity="0"/></linearGradient>
<linearGradient id="b92" gradientUnits="userSpaceOnUse" x1="300.56" y1="415.67" x2="305.70" y2="415.92"><stop offset="0" stop-color="#78c701"/><stop offset="1" stop-color="#7ac501"/></linearGradient>
<linearGradient id="w92" gradientUnits="userSpaceOnUse" x1="303.13" y1="415.80" x2="413.41" y2="297.72"><stop offset="0" stop-color="#fff" stop-opacity="1"/><stop offset="1" stop-color="#fff" stop-opacity="0"/></linearGradient>
<linearGradient id="b93" gradientUnits="userSpaceOnUse" x1="300.51" y1="415.61" x2="305.75" y2="415.99"><stop offset="0" stop-color="#7ac501"/><stop offset="1" stop-color="#7dc301"/></linearGradient>
<linearGradient id="w93" gradientUnits="userSpaceOnUse" x1="303.13" y1="415.80" x2="413.47" y2="298.19"><stop offset="0" stop-color="#fff" stop-opacity="1"/><stop offset="1" stop-color="#fff" stop-opacity="0"/></linearGradient>
<linearGradient id="b94" gradientUnits="userSpaceOnUse" x1="300.47" y1="415.53" x2="305.79" y2="416.06"><stop offset="0" stop-color="#7dc301"/><stop offset="1" stop-color="#7fc101"/></linearGradient>
<linearGradient id="w94" gradientUnits="userSpaceOnUse" x1="303.13" y1="415.80" x2="413.53" y2="298.58"><stop offset="0" stop-color="#fff" stop-opacity="1"/><stop offset="1" stop-color="#fff" stop-opacity="0"/></linearGradient>
<linearGradient id="b95" gradientUnits="userSpaceOnUse" x1="300.42" y1="415.45" x2="305.84" y2="416.14"><stop offset="0" stop-color="#7fc101"/><stop offset="1" stop-color="#81bf01"/></linearGradient>
<linearGradient id="w95" gradientUnits="userSpaceOnUse" x1="303.13" y1="415.80" x2="413.58" y2="298.91"><stop offset="0" stop-color="#fff" stop-opacity="1"/><stop offset="1" stop-color="#fff" stop-opacity="0"/></linearGradient>
<linearGradient id="b96" gradientUnits="userSpaceOnUse" x1="300.37" y1="415.37" x2="305.88" y2="416.22"><stop offset="0" stop-color="#81bf01"/><stop offset="1" stop-color="#84bd01"/></linearGradient>
<linearGradient id="w96" gradientUnits="userSpaceOnUse" x1="303.13" y1="415.80" x2="413.64" y2="299.20"><stop offset="0" stop-color="#fff" stop-opacity="1"/><stop offset="1" stop-color="#fff" stop-opacity="0"/></linearGradient>
<linearGradient id="b97" gradientUnits="userSpaceOnUse" x1="300.34" y1="415.28" x2="305.92" y2="416.31"><stop offset="0" stop-color="#84bd01"/><stop offset="1" stop-color="#86bb01"/></linearGradient>
<linearGradient id="w97" gradientUnits="userSpaceOnUse" x1="303.13" y1="415.80" x2="413.70" y2="299.45"><stop offset="0" stop-color="#fff" stop-opacity="1"/><stop offset="1" stop-color="#fff" stop-opacity="0"/></linearGradient>
<linearGradient id="b98" gradientUnits="userSpaceOnUse" x1="300.30" y1="415.19" x2="305.96" y2="416.41"><stop offset="0" stop-color="#86bb01"/><stop offset="1" stop-color="#89b901"/></linearGradient>
<linearGradient id="w98" gradientUnits="userSpaceOnUse" x1="303.13" y1="415.80" x2="413.75" y2="299.68"><stop offset="0" stop-color="#fff" stop-opacity="1"/><stop offset="1" stop-color="#fff" stop-opacity="0"/></linearGradient>
<linearGradient id="b99" gradientUnits="userSpaceOnUse" x1="300.27" y1="415.08" x2="305.99" y2="416.51"><stop offset="0" stop-color="#89b901"/><stop offset="1" stop-color="#8bb601"/></linearGradient>
<linearGradient id="w99" gradientUnits="userSpaceOnUse" x1="303.13" y1="415.80" x2="413.81" y2="299.89"><stop offset="0" stop-color="#fff" stop-opacity="1"/><stop offset="1" stop-color="#fff" stop-opacity="0"/></linearGradient>
<linearGradient id="b100" gradientUnits="userSpaceOnUse" x1="300.25" y1="414.98" x2="306.01" y2="416.61"><stop offset="0" stop-color="#8bb601"/><stop offset="1" stop-color="#8eb401"/></linearGradient>
<linearGradient id="w100" gradientUnits="userSpaceOnUse" x1="303.13" y1="415.80" x2="413.87" y2="300.09"><stop offset="0" stop-color="#fff" stop-opacity="1"/><stop offset="1" stop-color="#fff" stop-opacity="0"/></linearGradient>
<linearGradient id="b101" gradientUnits="userSpaceOnUse" x1="300.23" y1="414.87" x2="306.03" y2="416.73"><stop offset="0" stop-color="#8eb401"/><stop offset="1" stop-color="#90b200"/></linearGradient>
<linearGradient id="w101" gradientUnits="userSpaceOnUse" x1="303.13" y1="415.80" x2="413.93" y2="300.26"><stop offset="0" stop-color="#fff" stop-opacity="1"/><stop offset="1" stop-color="#fff" stop-opacity="0"/></linearGradient>
<linearGradient id="b102" gradientUnits="userSpaceOnUse" x1="300.22" y1="414.75" x2="306.04" y2="416.84"><stop offset="0" stop-color="#90b200"/><stop offset="1" stop-color="#93b000"/></linearGradient>
<linearGradient id="w102" gradientUnits="userSpaceOnUse" x1="303.13" y1="415.80" x2="413.99" y2="300.40"><stop offset="0" stop-color="#fff" stop-opacity="1"/><stop offset="1" stop-color="#fff" stop-opacity="0"/></linearGradient>
<linearGradient id="b103" gradientUnits="userSpaceOnUse" x1="300.22" y1="414.63" x2="306.04" y2="416.96"><stop offset="0" stop-color="#93b000"/><stop offset="1" stop-color="#95ae00"/></linearGradient>
<linearGradient id="w103" gradientUnits="userSpaceOnUse" x1="303.13" y1="415.80" x2="414.05" y2="300.54"><stop offset="0" stop-color="#fff" stop-opacity="1"/><stop offset="1" stop-color="#fff" stop-opacity="0"/></linearGradient>
<linearGradient id="b104" gradientUnits="userSpaceOnUse" x1="300.23" y1="414.51" x2="306.03" y2="417.08"><stop offset="0" stop-color="#95ae00"/><stop offset="1" stop-color="#98ac00"/></linearGradient>
<linearGradient id="w104" gradientUnits="userSpaceOnUse" x1="303.13" y1="415.80" x2="414.11" y2="300.66"><stop offset="0" stop-color="#fff" stop-opacity="1"/><stop offset="1" stop-color="#fff" stop-opacity="0"/></linearGradient>
<linearGradient id="b105" gradientUnits="userSpaceOnUse" x1="300.25" y1="414.39" x2="306.00" y2="417.20"><stop offset="0" stop-color="#98ac00"/><stop offset="1" stop-color="#9aaa00"/></linearGradient>
<linearGradient id="w105" gradientUnits="userSpaceOnUse" x1="303.13" y1="415.80" x2="414.16" y2="300.77"><stop offset="0" stop-color="#fff" stop-opacity="1"/><stop offset="1" stop-color="#fff" stop-opacity="0"/></linearGradient>
<linearGradient id="b106" gradientUnits="userSpaceOnUse" x1="300.29" y1="414.27" x2="305.97" y2="417.33"><stop offset="0" stop-color="#9aaa00"/><stop offset="1" stop-color="#9da800"/></linearGradient>
<linearGradient id="w106" gradientUnits="userSpaceOnUse" x1="303.13" y1="415.80" x2="414.22" y2="300.87"><stop offset="0" stop-color="#fff" stop-opacity="1"/><stop offset="1" stop-color="#fff" stop-opacity="0"/></linearGradient>
<linearGradient id="b107" gradientUnits="userSpaceOnUse" x1="300.33" y1="414.14" x2="305.93" y2="417.45"><stop offset="0" stop-color="#9da800"/><stop offset="1" stop-color="#9fa500"/></linearGradient>
<linearGradient id="w107" gradientUnits="userSpaceOnUse" x1="303.13" y1="415.80" x2="414.27" y2="300.95"><stop offset="0" stop-color="#fff" stop-opacity="1"/><stop offset="1" stop-color="#fff" stop-opacity="0"/></linearGradient>
<linearGradient id="b108" gradientUnits="userSpaceOnUse" x1="300.38" y1="414.03" x2="305.87" y2="417.57"><stop offset="0" stop-color="#9fa500"/><stop offset="1" stop-color="#a1a300"/></linearGradient>
<linearGradient id="w108" gradientUnits="userSpaceOnUse" x1="303.13" y1="415.80" x2="414.31" y2="301.02"><stop offset="0" stop-color="#fff" stop-opacity="1"/><stop offset="1" stop-color="#fff" stop-opacity="0"/></linearGradient>
<linearGradient id="b109" gradientUnits="userSpaceOnUse" x1="300.45" y1="413.91" x2="305.81" y2="417.68"><stop offset="0" stop-color="#a1a300"/><stop offset="1" stop-color="#a4a100"/></linearGradient>
<linearGradient id="w109" gradientUnits="userSpaceOnUse" x1="303.13" y1="415.80" x2="414.35" y2="301.08"><stop offset="0" stop-color="#fff" stop-opacity="1"/><stop offset="1" stop-color="#fff" stop-opacity="0"/></linearGradient>
<linearGradient id="b110" gradientUnits="userSpaceOnUse" x1="300.53" y1="413.80" x2="305.73" y2="417.79"><stop offset="0" stop-color="#a4a100"/><stop offset="1" stop-color="#a69f00"/></linearGradient>
<linearGradient id="w110" gradientUnits="userSpaceOnUse" x1="303.13" y1="415.80" x2="414.39" y2="301.12"><stop offset="0" stop-color="#fff" stop-opacity="1"/><stop offset="1" stop-color="#fff" stop-opacity="0"/></linearGradient>
<linearGradient id="b111" gradientUnits="userSpaceOnUse" x1="300.61" y1="413.70" x2="305.64" y2="417.89"><stop offset="0" stop-color="#a69f00"/><stop offset="1" stop-color="#a99d00"/></linearGradient>
<linearGradient id="w111" gradientUnits="userSpaceOnUse" x1="303.13" y1="415.80" x2="414.42" y2="301.17"><stop offset="0" stop-color="#fff" stop-opacity="1"/><stop offset="1" stop-color="#fff" stop-opacity="0"/></linearGradient>
<linearGradient id="b112" gradientUnits="userSpaceOnUse" x1="300.71" y1="413.61" x2="305.55" y2="417.98"><stop offset="0" stop-color="#a99d00"/><stop offset="1" stop-color="#ab9b00"/></linearGradient>
<linearGradient id="w112" gradientUnits="userSpaceOnUse" x1="303.13" y1="415.80" x2="414.45" y2="301.19"><stop offset="0" stop-color="#fff" stop-opacity="1"/><stop offset="1" stop-color="#fff" stop-opacity="0"/></linearGradient>
<linearGradient id="b113" gradientUnits="userSpaceOnUse" x1="300.82" y1="413.53" x2="305.44" y2="418.07"><stop offset="0" stop-color="#ab9b00"/><stop offset="1" stop-color="#ad9900"/></linearGradient>
<linearGradient id="w113" gradientUnits="userSpaceOnUse" x1="303.13" y1="415.80" x2="414.46" y2="301.21"><stop offset="0" stop-color="#fff" stop-opacity="1"/><stop offset="1" stop-color="#fff" stop-opacity="0"/></linearGradient>
<linearGradient id="b114" gradientUnits="userSpaceOnUse" x1="300.93" y1="413.46" x2="305.33" y2="418.14"><stop offset="0" stop-color="#ad9900"/><stop offset="1" stop-color="#b09700"/></linearGradient>
<linearGradient id="w114" gradientUnits="userSpaceOnUse" x1="303.13" y1="415.80" x2="414.46" y2="301.20"><stop offset="0" stop-color="#fff" stop-opacity="1"/><stop offset="1" stop-color="#fff" stop-opacity="0"/></linearGradient>
<linearGradient id="b115" gradientUnits="userSpaceOnUse" x1="301.05" y1="413.40" x2="305.21" y2="418.20"><stop offset="0" stop-color="#b09700"/><stop offset="1" stop-color="#b29500"/></linearGradient>
<linearGradient id="w115" gradientUnits="userSpaceOnUse" x1="303.13" y1="415.80" x2="414.44" y2="301.18"><stop offset="0" stop-color="#fff" stop-opacity="1"/><stop offset="1" stop-color="#fff" stop-opacity="0"/></linearGradient>
<linearGradient id="b116" gradientUnits="userSpaceOnUse" x1="301.17" y1="413.35" x2="305.09" y2="418.24"><stop offset="0" stop-color="#b29500"/><stop offset="1" stop-color="#b49300"/></linearGradient>
<linearGradient id="w116" gradientUnits="userSpaceOnUse" x1="303.13" y1="415.80" x2="414.40" y2="301.16"><stop offset="0" stop-color="#fff" stop-opacity="1"/><stop offset="1" stop-color="#fff" stop-opacity="0"/></linearGradient>
<linearGradient id="b117" gradientUnits="userSpaceOnUse" x1="301.29" y1="413.31" x2="304.97" y2="418.28"><stop offset="0" stop-color="#b49300"/><stop offset="1" stop-color="#b69100"/></linearGradient>
<linearGradient id="w117" gradientUnits="userSpaceOnUse" x1="303.13" y1="415.80" x2="414.37" y2="301.14"><stop offset="0" stop-color="#fff" stop-opacity="1"/><stop offset="1" stop-color="#fff" stop-opacity="0"/></linearGradient>
<linearGradient id="b118" gradientUnits="userSpaceOnUse" x1="301.42" y1="413.29" x2="304.84" y2="418.31"><stop offset="0" stop-color="#b69100"/><stop offset="1" stop-color="#b98f00"/></linearGradient>
<linearGradient id="w118" gradientUnits="userSpaceOnUse" x1="303.13" y1="415.80" x2="414.35" y2="301.12"><stop offset="0" stop-color="#fff" stop-opacity="1"/><stop offset="1" stop-color="#fff" stop-opacity="0"/></linearGradient>
<linearGradient id="b119" gradientUnits="userSpaceOnUse" x1="301.54" y1="413.27" x2="304.72" y2="418.32"><stop offset="0" stop-color="#b98f00"/><stop offset="1" stop-color="#bb8d00"/></linearGradient>
<linearGradient id="w119" gradientUnits="userSpaceOnUse" x1="303.13" y1="415.80" x2="414.32" y2="301.10"><stop offset="0" stop-color="#fff" stop-opacity="1"/><stop offset="1" stop-color="#fff" stop-opacity="0"/></linearGradient>
<linearGradient id="b120" gradientUnits="userSpaceOnUse" x1="301.66" y1="413.27" x2="304.60" y2="418.32"><stop offset="0" stop-color="#bb8d00"/><stop offset="1" stop-color="#bd8b00"/></linearGradient>
<linearGradient id="w120" gradientUnits="userSpaceOnUse" x1="303.13" y1="415.80" x2="414.30" y2="301.09"><stop offset="0" stop-color="#fff" stop-opacity="1"/><stop offset="1" stop-color="#fff" stop-opacity="0"/></linearGradient>
<linearGradient id="b121" gradientUnits="userSpaceOnUse" x1="301.78" y1="413.28" x2="304.48" y2="418.31"><stop offset="0" stop-color="#bd8b00"/><stop offset="1" stop-color="#bf8900"/></linearGradient>
<linearGradient id="w121" gradientUnits="userSpaceOnUse" x1="303.13" y1="415.80" x2="414.27" y2="301.07"><stop offset="0" stop-color="#fff" stop-opacity="1"/><stop offset="1" stop-color="#fff" stop-opacity="0"/></linearGradient>
<linearGradient id="b122" gradientUnits="userSpaceOnUse" x1="301.90" y1="413.30" x2="304.36" y2="418.29"><stop offset="0" stop-color="#bf8900"/><stop offset="1" stop-color="#c18700"/></linearGradient>
<linearGradient id="w122" gradientUnits="userSpaceOnUse" x1="303.13" y1="415.80" x2="414.24" y2="301.06"><stop offset="0" stop-color="#fff" stop-opacity="1"/><stop offset="1" stop-color="#fff" stop-opacity="0"/></linearGradient>
<linearGradient id="b123" gradientUnits="userSpaceOnUse" x1="302.01" y1="413.33" x2="304.25" y2="418.26"><stop offset="0" stop-color="#c18700"/><stop offset="1" stop-color="#c38500"/></linearGradient>
<linearGradient id="w123" gradientUnits="userSpaceOnUse" x1="303.13" y1="415.80" x2="414.25" y2="301.06"><stop offset="0" stop-color="#fff" stop-opacity="1"/><stop offset="1" stop-color="#fff" stop-opacity="0"/></linearGradient>
<linearGradient id="b124" gradientUnits="userSpaceOnUse" x1="302.11" y1="413.36" x2="304.15" y2="418.23"><stop offset="0" stop-color="#c38500"/><stop offset="1" stop-color="#c68400"/></linearGradient>
<linearGradient id="w124" gradientUnits="userSpaceOnUse" x1="303.13" y1="415.80" x2="414.30" y2="301.08"><stop offset="0" stop-color="#fff" stop-opacity="1"/><stop offset="1" stop-color="#fff" stop-opacity="0"/></linearGradient>
<linearGradient id="b125" gradientUnits="userSpaceOnUse" x1="302.21" y1="413.40" x2="304.05" y2="418.19"><stop offset="0" stop-color="#c68400"/><stop offset="1" stop-color="#c88200"/></linearGradient>
<linearGradient id="w125" gradientUnits="userSpaceOnUse" x1="303.13" y1="415.80" x2="414.38" y2="301.11"><stop offset="0" stop-color="#fff" stop-opacity="1"/><stop offset="1" stop-color="#fff" stop-opacity="0"/></linearGradient>
<linearGradient id="b126" gradientUnits="userSpaceOnUse" x1="302.31" y1="413.44" x2="303.95" y2="418.15"><stop offset="0" stop-color="#c88200"/><stop offset="1" stop-color="#ca8000"/></linearGradient>
<linearGradient id="w126" gradientUnits="userSpaceOnUse" x1="303.13" y1="415.80" x2="414.51" y2="301.16"><stop offset="0" stop-color="#fff" stop-opacity="1"/><stop offset="1" stop-color="#fff" stop-opacity="0"/></linearGradient>
<linearGradient id="b127" gradientUnits="userSpaceOnUse" x1="302.39" y1="413.50" x2="303.87" y2="418.10"><stop offset="0" stop-color="#ca8000"/><stop offset="1" stop-color="#cc7e00"/></linearGradient>
<linearGradient id="w127" gradientUnits="userSpaceOnUse" x1="303.13" y1="415.80" x2="414.60" y2="301.19"><stop offset="0" stop-color="#fff" stop-opacity="1"/><stop offset="1" stop-color="#fff" stop-opacity="0"/></linearGradient>
<linearGradient id="b128" gradientUnits="userSpaceOnUse" x1="302.48" y1="413.56" x2="303.78" y2="418.03"><stop offset="0" stop-color="#cc7e00"/><stop offset="1" stop-color="#ce7d00"/></linearGradient>
<linearGradient id="w128" gradientUnits="userSpaceOnUse" x1="303.13" y1="415.80" x2="414.65" y2="301.20"><stop offset="0" stop-color="#fff" stop-opacity="1"/><stop offset="1" stop-color="#fff" stop-opacity="0"/></linearGradient>
<linearGradient id="b129" gradientUnits="userSpaceOnUse" x1="302.56" y1="413.63" x2="303.70" y2="417.96"><stop offset="0" stop-color="#ce7d00"/><stop offset="1" stop-color="#cf7b00"/></linearGradient>
<linearGradient id="w129" gradientUnits="userSpaceOnUse" x1="303.13" y1="415.80" x2="414.65" y2="301.20"><stop offset="0" stop-color="#fff" stop-opacity="1"/><stop offset="1" stop-color="#fff" stop-opacity="0"/></linearGradient>
<linearGradient id="b130" gradientUnits="userSpaceOnUse" x1="302.63" y1="413.71" x2="303.63" y2="417.88"><stop offset="0" stop-color="#cf7b00"/><stop offset="1" stop-color="#d17900"/></linearGradient>
<linearGradient id="w130" gradientUnits="userSpaceOnUse" x1="303.13" y1="415.80" x2="414.59" y2="301.18"><stop offset="0" stop-color="#fff" stop-opacity="1"/><stop offset="1" stop-color="#fff" stop-opacity="0"/></linearGradient>
<linearGradient id="b131" gradientUnits="userSpaceOnUse" x1="302.32" y1="411.89" x2="303.94" y2="419.70"><stop offset="0" stop-color="#d17900"/><stop offset="1" stop-color="#d57600"/></linearGradient>
<linearGradient id="w131" gradientUnits="userSpaceOnUse" x1="303.13" y1="415.80" x2="414.44" y2="301.15"><stop offset="0" stop-color="#fff" stop-opacity="1"/><stop offset="1" stop-color="#fff" stop-opacity="0"/></linearGradient>
<linearGradient id="b132" gradientUnits="userSpaceOnUse" x1="302.53" y1="412.19" x2="303.73" y2="419.41"><stop offset="0" stop-color="#d57600"/><stop offset="1" stop-color="#d87300"/></linearGradient>
<linearGradient id="w132" gradientUnits="userSpaceOnUse" x1="303.13" y1="415.80" x2="414.32" y2="301.14"><stop offset="0" stop-color="#fff" stop-opacity="1"/><stop offset="1" stop-color="#fff" stop-opacity="0"/></linearGradient>
<linearGradient id="b133" gradientUnits="userSpaceOnUse" x1="302.69" y1="412.42" x2="303.57" y2="419.17"><stop offset="0" stop-color="#d87300"/><stop offset="1" stop-color="#db7100"/></linearGradient>
<linearGradient id="w133" gradientUnits="userSpaceOnUse" x1="303.13" y1="415.80" x2="414.33" y2="301.14"><stop offset="0" stop-color="#fff" stop-opacity="1"/><stop offset="1" stop-color="#fff" stop-opacity="0"/></linearGradient>
<linearGradient id="b134" gradientUnits="userSpaceOnUse" x1="302.82" y1="412.65" x2="303.44" y2="418.94"><stop offset="0" stop-color="#db7100"/><stop offset="1" stop-color="#de6e00"/></linearGradient>
<linearGradient id="w134" gradientUnits="userSpaceOnUse" x1="303.13" y1="415.80" x2="414.35" y2="301.14"><stop offset="0" stop-color="#fff" stop-opacity="1"/><stop offset="1" stop-color="#fff" stop-opacity="0"/></linearGradient>
<linearGradient id="b135" gradientUnits="userSpaceOnUse" x1="302.93" y1="412.92" x2="303.33" y2="418.67"><stop offset="0" stop-color="#de6e00"/><stop offset="1" stop-color="#e16b00"/></linearGradient>
<linearGradient id="w135" gradientUnits="userSpaceOnUse" x1="303.13" y1="415.80" x2="414.22" y2="301.13"><stop offset="0" stop-color="#fff" stop-opacity="1"/><stop offset="1" stop-color="#fff" stop-opacity="0"/></linearGradient>
<linearGradient id="b136" gradientUnits="userSpaceOnUse" x1="303.02" y1="413.21" x2="303.24" y2="418.38"><stop offset="0" stop-color="#e16b00"/><stop offset="1" stop-color="#e46900"/></linearGradient>
<linearGradient id="w136" gradientUnits="userSpaceOnUse" x1="303.13" y1="415.80" x2="413.95" y2="301.13"><stop offset="0" stop-color="#fff" stop-opacity="1"/><stop offset="1" stop-color="#fff" stop-opacity="0"/></linearGradient>
<linearGradient id="b137" gradientUnits="userSpaceOnUse" x1="303.08" y1="413.47" x2="303.18" y2="418.13"><stop offset="0" stop-color="#e46900"/><stop offset="1" stop-color="#e66700"/></linearGradient>
<linearGradient id="w137" gradientUnits="userSpaceOnUse" x1="303.13" y1="415.80" x2="413.83" y2="301.13"><stop offset="0" stop-color="#fff" stop-opacity="1"/><stop offset="1" stop-color="#fff" stop-opacity="0"/></linearGradient>
<linearGradient id="b138" gradientUnits="userSpaceOnUse" x1="303.13" y1="413.68" x2="303.13" y2="417.92"><stop offset="0" stop-color="#e66700"/><stop offset="1" stop-color="#e86500"/></linearGradient>
<linearGradient id="w138" gradientUnits="userSpaceOnUse" x1="303.13" y1="415.80" x2="414.08" y2="301.12"><stop offset="0" stop-color="#fff" stop-opacity="1"/><stop offset="1" stop-color="#fff" stop-opacity="0"/></linearGradient>
<linearGradient id="b139" gradientUnits="userSpaceOnUse" x1="303.16" y1="413.87" x2="303.10" y2="417.72"><stop offset="0" stop-color="#e86500"/><stop offset="1" stop-color="#ea6300"/></linearGradient>
<linearGradient id="w139" gradientUnits="userSpaceOnUse" x1="303.13" y1="415.80" x2="414.44" y2="301.11"><stop offset="0" stop-color="#fff" stop-opacity="1"/><stop offset="1" stop-color="#fff" stop-opacity="0"/></linearGradient>
<linearGradient id="b140" gradientUnits="userSpaceOnUse" x1="303.18" y1="414.06" x2="303.08" y2="417.53"><stop offset="0" stop-color="#ea6300"/><stop offset="1" stop-color="#ec6200"/></linearGradient>
<linearGradient id="w140" gradientUnits="userSpaceOnUse" x1="303.13" y1="415.80" x2="414.63" y2="301.10"><stop offset="0" stop-color="#fff" stop-opacity="1"/><stop offset="1" stop-color="#fff" stop-opacity="0"/></linearGradient>
<linearGradient id="b141" gradientUnits="userSpaceOnUse" x1="303.24" y1="413.52" x2="303.02" y2="418.08"><stop offset="0" stop-color="#ec6200"/><stop offset="1" stop-color="#ef6000"/></linearGradient>
<linearGradient id="w141" gradientUnits="userSpaceOnUse" x1="303.13" y1="415.80" x2="414.71" y2="301.09"><stop offset="0" stop-color="#fff" stop-opacity="1"/><stop offset="1" stop-color="#fff" stop-opacity="0"/></linearGradient>
<linearGradient id="b142" gradientUnits="userSpaceOnUse" x1="303.26" y1="413.86" x2="303.00" y2="417.74"><stop offset="0" stop-color="#ef6000"/><stop offset="1" stop-color="#f15e00"/></linearGradient>
<linearGradient id="w142" gradientUnits="userSpaceOnUse" x1="303.13" y1="415.80" x2="414.52" y2="301.11"><stop offset="0" stop-color="#fff" stop-opacity="1"/><stop offset="1" stop-color="#fff" stop-opacity="0"/></linearGradient>
<linearGradient id="b143" gradientUnits="userSpaceOnUse" x1="303.26" y1="414.14" x2="303.00" y2="417.45"><stop offset="0" stop-color="#f15e00"/><stop offset="1" stop-color="#f35c00"/></linearGradient>
<linearGradient id="w143" gradientUnits="userSpaceOnUse" x1="303.13" y1="415.80" x2="414.01" y2="301.16"><stop offset="0" stop-color="#fff" stop-opacity="1"/><stop offset="1" stop-color="#fff" stop-opacity="0"/></linearGradient>
<linearGradient id="b144" gradientUnits="userSpaceOnUse" x1="303.30" y1="413.94" x2="302.96" y2="417.65"><stop offset="0" stop-color="#f35c00"/><stop offset="1" stop-color="#f55a00"/></linearGradient>
<linearGradient id="w144" gradientUnits="userSpaceOnUse" x1="303.13" y1="415.80" x2="414.12" y2="301.15"><stop offset="0" stop-color="#fff" stop-opacity="1"/><stop offset="1" stop-color="#fff" stop-opacity="0"/></linearGradient>
<linearGradient id="b145" gradientUnits="userSpaceOnUse" x1="303.30" y1="414.23" x2="302.96" y2="417.37"><stop offset="0" stop-color="#f55a00"/><stop offset="1" stop-color="#f75900"/></linearGradient>
<linearGradient id="w145" gradientUnits="userSpaceOnUse" x1="303.13" y1="415.80" x2="414.44" y2="301.11"><stop offset="0" stop-color="#fff" stop-opacity="1"/><stop offset="1" stop-color="#fff" stop-opacity="0"/></linearGradient>
<linearGradient id="b146" gradientUnits="userSpaceOnUse" x1="303.33" y1="414.16" x2="302.93" y2="417.43"><stop offset="0" stop-color="#f75900"/><stop offset="1" stop-color="#f95700"/></linearGradient>
<linearGradient id="w146" gradientUnits="userSpaceOnUse" x1="303.13" y1="415.80" x2="414.69" y2="301.07"><stop offset="0" stop-color="#fff" stop-opacity="1"/><stop offset="1" stop-color="#fff" stop-opacity="0"/></linearGradient>
<linearGradient id="b147" gradientUnits="userSpaceOnUse" x1="303.33" y1="414.26" x2="302.93" y2="417.33"><stop offset="0" stop-color="#f95700"/><stop offset="1" stop-color="#fa5500"/></linearGradient>
<linearGradient id="w147" gradientUnits="userSpaceOnUse" x1="303.13" y1="415.80" x2="414.68" y2="301.07"><stop offset="0" stop-color="#fff" stop-opacity="1"/><stop offset="1" stop-color="#fff" stop-opacity="0"/></linearGradient>
<linearGradient id="b148" gradientUnits="userSpaceOnUse" x1="303.35" y1="414.29" x2="302.91" y2="417.31"><stop offset="0" stop-color="#fa5500"/><stop offset="1" stop-color="#fc5300"/></linearGradient>
<linearGradient id="w148" gradientUnits="userSpaceOnUse" x1="303.13" y1="415.80" x2="414.30" y2="301.14"><stop offset="0" stop-color="#fff" stop-opacity="1"/><stop offset="1" stop-color="#fff" stop-opacity="0"/></linearGradient>
<linearGradient id="b149" gradientUnits="userSpaceOnUse" x1="303.36" y1="414.33" x2="302.90" y2="417.26"><stop offset="0" stop-color="#fc5300"/><stop offset="1" stop-color="#fe5200"/></linearGradient>
<linearGradient id="w149" gradientUnits="userSpaceOnUse" x1="303.13" y1="415.80" x2="414.94" y2="301.02"><stop offset="0" stop-color="#fff" stop-opacity="1"/><stop offset="1" stop-color="#fff" stop-opacity="0"/></linearGradient>
<linearGradient id="b150" gradientUnits="userSpaceOnUse" x1="303.24" y1="415.15" x2="303.02" y2="416.45"><stop offset="0" stop-color="#fe5200"/><stop offset="1" stop-color="#ff5100"/></linearGradient>
<linearGradient id="w150" gradientUnits="userSpaceOnUse" x1="303.13" y1="415.80" x2="414.94" y2="301.02"><stop offset="0" stop-color="#fff" stop-opacity="1"/><stop offset="1" stop-color="#fff" stop-opacity="0"/></linearGradient>
<linearGradient id="b151" gradientUnits="userSpaceOnUse" x1="304.83" y1="407.17" x2="301.43" y2="424.42"><stop offset="0" stop-color="#ff5100"/><stop offset="1" stop-color="#f14b12"/></linearGradient>
<linearGradient id="w151" gradientUnits="userSpaceOnUse" x1="303.13" y1="415.80" x2="367.26" y2="557.53"><stop offset="0" stop-color="#fff" stop-opacity="1"/><stop offset="1" stop-color="#fff" stop-opacity="0"/></linearGradient>
<linearGradient id="b152" gradientUnits="userSpaceOnUse" x1="305.68" y1="406.48" x2="300.58" y2="425.11"><stop offset="0" stop-color="#f14b12"/><stop offset="1" stop-color="#e34624"/></linearGradient>
<linearGradient id="w152" gradientUnits="userSpaceOnUse" x1="303.13" y1="415.80" x2="367.26" y2="557.53"><stop offset="0" stop-color="#fff" stop-opacity="1"/><stop offset="1" stop-color="#fff" stop-opacity="0"/></linearGradient>
<linearGradient id="b153" gradientUnits="userSpaceOnUse" x1="306.82" y1="405.82" x2="299.43" y2="425.78"><stop offset="0" stop-color="#e34624"/><stop offset="1" stop-color="#d54036"/></linearGradient>
<linearGradient id="w153" gradientUnits="userSpaceOnUse" x1="303.13" y1="415.80" x2="367.26" y2="557.53"><stop offset="0" stop-color="#fff" stop-opacity="1"/><stop offset="1" stop-color="#fff" stop-opacity="0"/></linearGradient>
<linearGradient id="b154" gradientUnits="userSpaceOnUse" x1="308.34" y1="405.30" x2="297.92" y2="426.30"><stop offset="0" stop-color="#d54036"/><stop offset="1" stop-color="#c73a48"/></linearGradient>
<linearGradient id="w154" gradientUnits="userSpaceOnUse" x1="303.13" y1="415.80" x2="367.26" y2="557.53"><stop offset="0" stop-color="#fff" stop-opacity="1"/><stop offset="1" stop-color="#fff" stop-opacity="0"/></linearGradient>
<linearGradient id="b155" gradientUnits="userSpaceOnUse" x1="310.27" y1="405.11" x2="295.99" y2="426.48"><stop offset="0" stop-color="#c73a48"/><stop offset="1" stop-color="#ba355a"/></linearGradient>
<linearGradient id="w155" gradientUnits="userSpaceOnUse" x1="303.13" y1="415.80" x2="367.26" y2="557.53"><stop offset="0" stop-color="#fff" stop-opacity="1"/><stop offset="1" stop-color="#fff" stop-opacity="0"/></linearGradient>
<linearGradient id="b156" gradientUnits="userSpaceOnUse" x1="312.53" y1="405.53" x2="293.73" y2="426.06"><stop offset="0" stop-color="#ba355a"/><stop offset="1" stop-color="#ac2f6d"/></linearGradient>
<linearGradient id="w156" gradientUnits="userSpaceOnUse" x1="303.13" y1="415.80" x2="367.26" y2="557.53"><stop offset="0" stop-color="#fff" stop-opacity="1"/><stop offset="1" stop-color="#fff" stop-opacity="0"/></linearGradient>
<linearGradient id="b157" gradientUnits="userSpaceOnUse" x1="314.83" y1="406.83" x2="291.43" y2="424.77"><stop offset="0" stop-color="#ac2f6d"/><stop offset="1" stop-color="#9e297f"/></linearGradient>
<linearGradient id="w157" gradientUnits="userSpaceOnUse" x1="303.13" y1="415.80" x2="367.26" y2="557.53"><stop offset="0" stop-color="#fff" stop-opacity="1"/><stop offset="1" stop-color="#fff" stop-opacity="0"/></linearGradient>
<linearGradient id="b158" gradientUnits="userSpaceOnUse" x1="316.66" y1="409.03" x2="289.60" y2="422.56"><stop offset="0" stop-color="#9e297f"/><stop offset="1" stop-color="#902491"/></linearGradient>
<linearGradient id="w158" gradientUnits="userSpaceOnUse" x1="303.13" y1="415.80" x2="367.26" y2="557.53"><stop offset="0" stop-color="#fff" stop-opacity="1"/><stop offset="1" stop-color="#fff" stop-opacity="0"/></linearGradient>
<linearGradient id="b159" gradientUnits="userSpaceOnUse" x1="317.54" y1="411.80" x2="288.72" y2="419.79"><stop offset="0" stop-color="#902491"/><stop offset="1" stop-color="#821ea3"/></linearGradient>
<linearGradient id="w159" gradientUnits="userSpaceOnUse" x1="303.13" y1="415.80" x2="367.26" y2="557.53"><stop offset="0" stop-color="#fff" stop-opacity="1"/><stop offset="1" stop-color="#fff" stop-opacity="0"/></linearGradient>
<linearGradient id="b160" gradientUnits="userSpaceOnUse" x1="317.36" y1="414.54" x2="288.90" y2="417.05"><stop offset="0" stop-color="#821ea3"/><stop offset="1" stop-color="#7418b5"/></linearGradient>
<linearGradient id="w160" gradientUnits="userSpaceOnUse" x1="303.13" y1="415.80" x2="367.26" y2="557.53"><stop offset="0" stop-color="#fff" stop-opacity="1"/><stop offset="1" stop-color="#fff" stop-opacity="0"/></linearGradient>
<linearGradient id="b161" gradientUnits="userSpaceOnUse" x1="316.38" y1="416.78" x2="289.88" y2="414.81"><stop offset="0" stop-color="#7418b5"/><stop offset="1" stop-color="#6613c7"/></linearGradient>
<linearGradient id="w161" gradientUnits="userSpaceOnUse" x1="303.13" y1="415.80" x2="367.26" y2="557.53"><stop offset="0" stop-color="#fff" stop-opacity="1"/><stop offset="1" stop-color="#fff" stop-opacity="0"/></linearGradient>
<linearGradient id="b162" gradientUnits="userSpaceOnUse" x1="315.03" y1="418.36" x2="291.23" y2="413.24"><stop offset="0" stop-color="#6613c7"/><stop offset="1" stop-color="#580dd9"/></linearGradient>
<linearGradient id="w162" gradientUnits="userSpaceOnUse" x1="303.13" y1="415.80" x2="367.26" y2="557.53"><stop offset="0" stop-color="#fff" stop-opacity="1"/><stop offset="1" stop-color="#fff" stop-opacity="0"/></linearGradient>
<linearGradient id="b163" gradientUnits="userSpaceOnUse" x1="313.61" y1="419.35" x2="292.65" y2="412.25"><stop offset="0" stop-color="#580dd9"/><stop offset="1" stop-color="#4a07eb"/></linearGradient>
<linearGradient id="w163" gradientUnits="userSpaceOnUse" x1="303.13" y1="415.80" x2="367.26" y2="557.53"><stop offset="0" stop-color="#fff" stop-opacity="1"/><stop offset="1" stop-color="#fff" stop-opacity="0"/></linearGradient>
<linearGradient id="b164" gradientUnits="userSpaceOnUse" x1="312.29" y1="419.90" x2="293.97" y2="411.69"><stop offset="0" stop-color="#4a07eb"/><stop offset="1" stop-color="#3c02fd"/></linearGradient>
<linearGradient id="w164" gradientUnits="userSpaceOnUse" x1="303.13" y1="415.80" x2="367.26" y2="557.53"><stop offset="0" stop-color="#fff" stop-opacity="1"/><stop offset="1" stop-color="#fff" stop-opacity="0"/></linearGradient>
</defs>
<rect x="0" y="0" width="733" height="687" fill="#b2b2b2"/>
<rect x="0" y="26" width="716" height="661" fill="#d8d4cd"/>
<rect x="0" y="26" width="14" height="661" fill="url(#gl)"/>
<rect x="702" y="26" width="14" height="661" fill="url(#gr)"/>
<rect x="0" y="26" width="712" height="1" fill="#f1eee4"/>
<rect x="1" y="27" width="707" height="1" fill="#ece9de"/>
<rect x="3" y="685" width="712" height="1" fill="#c0bdb6"/>
<rect x="3" y="686" width="713" height="1" fill="#8e8c86"/>
<rect x="72" y="34" width="623" height="607" fill="#fff"/>
<g shape-rendering="crispEdges"><rect x="72" y="34" width="622" height="1" fill="#a6a6a8"/><rect x="72" y="34" width="1" height="606" fill="#a2a2a6"/><rect x="73" y="35" width="1" height="605" fill="#acacb0"/><rect x="74" y="639" width="620" height="1" fill="#b0b0b0"/><rect x="73" y="640" width="622" height="1" fill="#fff"/><rect x="694" y="35" width="1" height="606" fill="#fff"/></g>
<clipPath id="pc"><rect x="74" y="35" width="620" height="604"/></clipPath>
<g shape-rendering="crispEdges" clip-path="url(#pc)">
<g><polygon points="303.13,415.80 186.86,649.39 181.91,647.11 179.91,645.34" fill="url(#b0)"/><polygon points="303.13,415.80 181.91,647.11 177.91,643.58 175.63,641.63" fill="url(#b1)"/><polygon points="303.13,415.80 177.91,643.58 173.35,639.68 171.19,637.78" fill="url(#b2)"/><polygon points="303.13,415.80 173.35,639.68 169.03,635.88 166.94,633.84" fill="url(#b3)"/><polygon points="303.13,415.80 169.03,635.88 164.85,631.79 162.44,629.05" fill="url(#b4)"/><polygon points="303.13,415.80 164.85,631.79 160.03,626.31 157.84,623.30" fill="url(#b5)"/><polygon points="303.13,415.80 160.03,626.31 155.65,620.29 153.93,617.60" fill="url(#b6)"/><polygon points="303.13,415.80 155.65,620.29 152.21,614.92 150.32,611.66" fill="url(#b7)"/><polygon points="303.13,415.80 152.21,614.92 148.42,608.40 146.35,604.49" fill="url(#b8)"/><polygon points="303.13,415.80 148.42,608.40 144.29,600.58 142.02,595.86" fill="url(#b9)"/><polygon points="303.13,415.80 144.29,600.58 139.75,591.14 138.53,588.43" fill="url(#b10)"/><polygon points="303.13,415.80 139.75,591.14 137.32,585.71 136.04,582.73" fill="url(#b11)"/><polygon points="303.13,415.80 137.32,585.71 134.77,579.75 133.44,576.50" fill="url(#b12)"/><polygon points="303.13,415.80 134.77,579.75 132.11,573.24 130.71,569.71" fill="url(#b13)"/><polygon points="303.13,415.80 132.11,573.24 129.32,566.17 127.85,562.35" fill="url(#b14)"/><polygon points="303.13,415.80 129.32,566.17 126.39,558.52 124.85,554.39" fill="url(#b15)"/><polygon points="303.13,415.80 126.39,558.52 123.31,550.26 121.70,545.79" fill="url(#b16)"/><polygon points="303.13,415.80 123.31,550.26 120.10,541.33 118.43,536.51" fill="url(#b17)"/><polygon points="303.13,415.80 120.10,541.33 116.76,531.69 115.06,526.49" fill="url(#b18)"/><polygon points="303.13,415.80 116.76,531.69 113.35,521.29 111.62,515.71" fill="url(#b19)"/><polygon points="303.13,415.80 113.35,521.29 109.89,510.13 108.17,504.18" fill="url(#b20)"/><polygon points="303.13,415.80 109.89,510.13 106.45,498.22 104.74,491.89" fill="url(#b21)"/><polygon points="303.13,415.80 106.45,498.22 103.04,485.57 101.34,478.87" fill="url(#b22)"/><polygon points="303.13,415.80 103.04,485.57 99.64,472.16 97.95,465.08" fill="url(#b23)"/><polygon points="303.13,415.80 99.64,472.16 96.26,458.00 94.56,450.54" fill="url(#b24)"/><polygon points="303.13,415.80 96.26,458.00 92.87,443.08 91.18,435.26" fill="url(#b25)"/><polygon points="303.13,415.80 92.87,443.08 89.48,427.43 87.82,419.28" fill="url(#b26)"/><polygon points="303.13,415.80 89.48,427.43 86.15,411.12 84.53,402.70" fill="url(#b27)"/><polygon points="303.13,415.80 86.15,411.12 82.91,394.27 81.36,385.62" fill="url(#b28)"/><polygon points="303.13,415.80 82.91,394.27 79.80,376.96 78.33,368.15" fill="url(#b29)"/><polygon points="303.13,415.80 79.80,376.96 76.85,359.33 75.48,350.42" fill="url(#b30)"/><polygon points="303.13,415.80 76.85,359.33 74.11,341.51 72.86,332.55" fill="url(#b31)"/><polygon points="303.13,415.80 74.11,341.51 71.60,323.59 70.48,314.60" fill="url(#b32)"/><polygon points="303.13,415.80 71.60,323.59 69.35,305.62 68.36,296.66" fill="url(#b33)"/><polygon points="303.13,415.80 69.35,305.62 67.37,287.70 66.53,278.80" fill="url(#b34)"/><polygon points="303.13,415.80 67.37,287.70 65.69,269.90 65.00,261.13" fill="url(#b35)"/><polygon points="303.13,415.80 65.69,269.90 64.31,252.37 63.80,243.81" fill="url(#b36)"/><polygon points="303.13,415.80 64.31,252.37 63.28,235.26 62.96,226.96" fill="url(#b37)"/><polygon points="303.13,415.80 63.28,235.26 62.63,218.66 62.50,210.64" fill="url(#b38)"/><polygon points="303.13,415.80 62.63,218.66 62.38,202.61 62.46,194.85" fill="url(#b39)"/><polygon points="303.13,415.80 62.38,202.61 62.54,187.10 62.83,179.60" fill="url(#b40)"/><polygon points="303.13,415.80 62.54,187.10 63.11,172.10 63.61,164.91" fill="url(#b41)"/><polygon points="303.13,415.80 63.11,172.10 64.11,157.72 64.83,150.88" fill="url(#b42)"/><polygon points="303.13,415.80 64.11,157.72 65.56,144.04 66.51,137.62" fill="url(#b43)"/><polygon points="303.13,415.80 65.56,144.04 67.46,131.19 68.66,125.22" fill="url(#b44)"/><polygon points="303.13,415.80 67.46,131.19 69.85,119.26 71.27,113.77" fill="url(#b45)"/><polygon points="303.13,415.80 69.85,119.26 72.70,108.28 74.33,103.30" fill="url(#b46)"/><polygon points="303.13,415.80 72.70,108.28 75.97,98.31 77.80,93.87" fill="url(#b47)"/><polygon points="303.13,415.80 75.97,98.31 79.64,89.44 81.66,85.59" fill="url(#b48)"/><polygon points="303.13,415.80 79.64,89.44 83.69,81.74 85.89,78.51" fill="url(#b49)"/><polygon points="303.13,415.80 83.69,81.74 88.09,75.27 90.46,72.65" fill="url(#b50)"/><polygon points="303.13,415.80 88.09,75.27 92.82,70.03 95.32,67.97" fill="url(#b51)"/><polygon points="303.13,415.80 92.82,70.03 97.82,65.92 100.43,64.40" fill="url(#b52)"/><polygon points="303.13,415.80 97.82,65.92 103.04,62.89 105.74,61.87" fill="url(#b53)"/><polygon points="303.13,415.80 103.04,62.89 108.44,60.86 111.21,60.32" fill="url(#b54)"/><polygon points="303.13,415.80 108.44,60.86 113.98,59.77 116.81,59.67" fill="url(#b55)"/><polygon points="303.13,415.80 113.98,59.77 119.64,59.57 122.52,59.85" fill="url(#b56)"/><polygon points="303.13,415.80 119.64,59.57 125.40,60.14 128.32,60.74" fill="url(#b57)"/><polygon points="303.13,415.80 125.40,60.14 131.24,61.35 134.19,62.20" fill="url(#b58)"/><polygon points="303.13,415.80 131.24,61.35 137.14,63.06 140.11,64.12" fill="url(#b59)"/><polygon points="303.13,415.80 137.14,63.06 143.08,65.18 146.07,66.40" fill="url(#b60)"/><polygon points="303.13,415.80 143.08,65.18 149.06,67.62 152.06,68.99" fill="url(#b61)"/><polygon points="303.13,415.80 149.06,67.62 155.05,70.36 158.03,71.83" fill="url(#b62)"/><polygon points="303.13,415.80 155.05,70.36 161.01,73.31 163.95,74.87" fill="url(#b63)"/><polygon points="303.13,415.80 161.01,73.31 166.90,76.43 169.80,78.04" fill="url(#b64)"/><polygon points="303.13,415.80 166.90,76.43 172.70,79.65 175.56,81.29" fill="url(#b65)"/><polygon points="303.13,415.80 172.70,79.65 178.41,82.94 181.22,84.62" fill="url(#b66)"/><polygon points="303.13,415.80 178.41,82.94 184.03,86.30 186.81,88.02" fill="url(#b67)"/><polygon points="303.13,415.80 184.03,86.30 189.59,89.73 192.35,91.50" fill="url(#b68)"/><polygon points="303.13,415.80 189.59,89.73 195.10,93.26 197.83,95.08" fill="url(#b69)"/><polygon points="303.13,415.80 195.10,93.26 200.56,96.89 203.28,98.75" fill="url(#b70)"/><polygon points="303.13,415.80 200.56,96.89 205.99,100.61 208.69,102.51" fill="url(#b71)"/><polygon points="303.13,415.80 205.99,100.61 211.38,104.41 214.06,106.35" fill="url(#b72)"/><polygon points="303.13,415.80 211.38,104.41 216.74,108.29 219.41,110.28" fill="url(#b73)"/><polygon points="303.13,415.80 216.74,108.29 222.08,112.26 224.74,114.29" fill="url(#b74)"/><polygon points="303.13,415.80 222.08,112.26 227.40,116.31 230.05,118.37" fill="url(#b75)"/><polygon points="303.13,415.80 227.40,116.31 232.70,120.44 235.35,122.54" fill="url(#b76)"/><polygon points="303.13,415.80 232.70,120.44 237.99,124.64 240.63,126.78" fill="url(#b77)"/><polygon points="303.13,415.80 237.99,124.64 243.27,128.92 245.91,131.09" fill="url(#b78)"/><polygon points="303.13,415.80 243.27,128.92 248.54,133.26 251.17,135.46" fill="url(#b79)"/><polygon points="303.13,415.80 248.54,133.26 253.80,137.65 256.42,139.88" fill="url(#b80)"/><polygon points="303.13,415.80 253.80,137.65 259.04,142.11 261.66,144.36" fill="url(#b81)"/><polygon points="303.13,415.80 259.04,142.11 264.28,146.62 266.89,148.90" fill="url(#b82)"/><polygon points="303.13,415.80 264.28,146.62 269.51,151.18 272.12,153.48" fill="url(#b83)"/><polygon points="303.13,415.80 269.51,151.18 274.74,155.78 277.35,158.11" fill="url(#b84)"/><polygon points="303.13,415.80 274.74,155.78 279.96,160.43 282.57,162.78" fill="url(#b85)"/><polygon points="303.13,415.80 279.96,160.43 285.19,165.12 287.80,167.49" fill="url(#b86)"/><polygon points="303.13,415.80 285.19,165.12 290.41,169.85 293.02,172.23" fill="url(#b87)"/><polygon points="303.13,415.80 290.41,169.85 295.63,174.61 298.24,177.01" fill="url(#b88)"/><polygon points="303.13,415.80 295.63,174.61 300.85,179.41 303.46,181.82" fill="url(#b89)"/><polygon points="303.13,415.80 300.85,179.41 306.07,184.23 308.68,186.66" fill="url(#b90)"/><polygon points="303.13,415.80 306.07,184.23 311.29,189.08 313.90,191.52" fill="url(#b91)"/><polygon points="303.13,415.80 311.29,189.08 316.52,193.96 319.13,196.41" fill="url(#b92)"/><polygon points="303.13,415.80 316.52,193.96 321.74,198.86 324.34,201.32" fill="url(#b93)"/><polygon points="303.13,415.80 321.74,198.86 326.95,203.77 329.56,206.24" fill="url(#b94)"/><polygon points="303.13,415.80 326.95,203.77 332.17,208.70 334.78,211.17" fill="url(#b95)"/><polygon points="303.13,415.80 332.17,208.70 337.38,213.64 339.99,216.12" fill="url(#b96)"/><polygon points="303.13,415.80 337.38,213.64 342.59,218.60 345.20,221.08" fill="url(#b97)"/><polygon points="303.13,415.80 342.59,218.60 347.80,223.55 350.40,226.04" fill="url(#b98)"/><polygon points="303.13,415.80 347.80,223.55 353.00,228.52 355.59,231.00" fill="url(#b99)"/><polygon points="303.13,415.80 353.00,228.52 358.19,233.49 360.78,235.97" fill="url(#b100)"/><polygon points="303.13,415.80 358.19,233.49 363.37,238.46 365.96,240.95" fill="url(#b101)"/><polygon points="303.13,415.80 363.37,238.46 368.55,243.43 371.13,245.91" fill="url(#b102)"/><polygon points="303.13,415.80 368.55,243.43 373.71,248.40 376.28,250.88" fill="url(#b103)"/><polygon points="303.13,415.80 373.71,248.40 378.86,253.36 381.42,255.83" fill="url(#b104)"/><polygon points="303.13,415.80 378.86,253.36 383.99,258.31 386.54,260.78" fill="url(#b105)"/><polygon points="303.13,415.80 383.99,258.31 389.10,263.25 391.65,265.72" fill="url(#b106)"/><polygon points="303.13,415.80 389.10,263.25 394.19,268.18 396.73,270.64" fill="url(#b107)"/><polygon points="303.13,415.80 394.19,268.18 399.27,273.10 401.79,275.54" fill="url(#b108)"/><polygon points="303.13,415.80 399.27,273.10 404.31,277.99 406.82,280.43" fill="url(#b109)"/><polygon points="303.13,415.80 404.31,277.99 409.33,282.86 411.83,285.29" fill="url(#b110)"/><polygon points="303.13,415.80 409.33,282.86 414.33,287.71 416.81,290.12" fill="url(#b111)"/><polygon points="303.13,415.80 414.33,287.71 419.29,292.53 421.75,294.92" fill="url(#b112)"/><polygon points="303.13,415.80 419.29,292.53 424.21,297.31 426.66,299.69" fill="url(#b113)"/><polygon points="303.13,415.80 424.21,297.31 429.10,302.06 431.53,304.42" fill="url(#b114)"/><polygon points="303.13,415.80 429.10,302.06 433.95,306.77 436.36,309.11" fill="url(#b115)"/><polygon points="303.13,415.80 433.95,306.77 438.76,311.44 441.14,313.75" fill="url(#b116)"/><polygon points="303.13,415.80 438.76,311.44 443.53,316.07 445.89,318.35" fill="url(#b117)"/><polygon points="303.13,415.80 443.53,316.07 448.25,320.64 450.58,322.91" fill="url(#b118)"/><polygon points="303.13,415.80 448.25,320.64 452.92,325.17 455.23,327.41" fill="url(#b119)"/><polygon points="303.13,415.80 452.92,325.17 457.54,329.65 459.82,331.86" fill="url(#b120)"/><polygon points="303.13,415.80 457.54,329.65 462.10,334.07 464.35,336.24" fill="url(#b121)"/><polygon points="303.13,415.80 462.10,334.07 466.60,338.42 468.82,340.57" fill="url(#b122)"/><polygon points="303.13,415.80 466.60,338.42 471.03,342.72 473.22,344.84" fill="url(#b123)"/><polygon points="303.13,415.80 471.03,342.72 475.41,346.96 477.56,349.05" fill="url(#b124)"/><polygon points="303.13,415.80 475.41,346.96 479.71,351.13 481.83,353.19" fill="url(#b125)"/><polygon points="303.13,415.80 479.71,351.13 483.95,355.25 486.03,357.27" fill="url(#b126)"/><polygon points="303.13,415.80 483.95,355.25 488.11,359.30 490.14,361.28" fill="url(#b127)"/><polygon points="303.13,415.80 488.11,359.30 492.18,363.26 494.16,365.19" fill="url(#b128)"/><polygon points="303.13,415.80 492.18,363.26 496.15,367.12 498.07,368.99" fill="url(#b129)"/><polygon points="303.13,415.80 496.15,367.12 500.00,370.86 503.66,374.42" fill="url(#b130)"/><polygon points="303.13,415.80 500.00,370.86 507.33,377.98 510.79,381.34" fill="url(#b131)"/><polygon points="303.13,415.80 507.33,377.98 514.26,384.70 517.56,387.91" fill="url(#b132)"/><polygon points="303.13,415.80 514.26,384.70 520.87,391.12 524.03,394.18" fill="url(#b133)"/><polygon points="303.13,415.80 520.87,391.12 527.18,397.23 530.13,400.09" fill="url(#b134)"/><polygon points="303.13,415.80 527.18,397.23 533.08,402.95 535.79,405.57" fill="url(#b135)"/><polygon points="303.13,415.80 533.08,402.95 538.51,408.20 541.01,410.61" fill="url(#b136)"/><polygon points="303.13,415.80 538.51,408.20 543.52,413.03 545.83,415.27" fill="url(#b137)"/><polygon points="303.13,415.80 543.52,413.03 548.15,417.51 550.28,419.59" fill="url(#b138)"/><polygon points="303.13,415.80 548.15,417.51 552.42,421.66 554.37,423.56" fill="url(#b139)"/><polygon points="303.13,415.80 552.42,421.66 556.33,425.46 558.95,428.01" fill="url(#b140)"/><polygon points="303.13,415.80 556.33,425.46 561.57,430.56 563.85,432.77" fill="url(#b141)"/><polygon points="303.13,415.80 561.57,430.56 566.12,434.98 568.12,436.91" fill="url(#b142)"/><polygon points="303.13,415.80 566.12,434.98 570.11,438.83 572.38,441.03" fill="url(#b143)"/><polygon points="303.13,415.80 570.11,438.83 574.65,443.23 576.60,445.12" fill="url(#b144)"/><polygon points="303.13,415.80 574.65,443.23 578.55,447.01 580.61,449.02" fill="url(#b145)"/><polygon points="303.13,415.80 578.55,447.01 582.68,451.03 584.65,452.95" fill="url(#b146)"/><polygon points="303.13,415.80 582.68,451.03 586.62,454.86 588.60,456.78" fill="url(#b147)"/><polygon points="303.13,415.80 586.62,454.86 590.58,458.70 592.52,460.59" fill="url(#b148)"/><polygon points="303.13,415.80 590.58,458.70 594.46,462.49 595.34,463.34" fill="url(#b149)"/><polygon points="303.13,415.80 594.46,462.49 596.21,464.19 581.59,470.80" fill="url(#b150)"/><polygon points="303.13,415.80 596.21,464.19 566.97,477.42 552.35,484.03" fill="url(#b151)"/><polygon points="303.13,415.80 566.97,477.42 537.73,490.64 523.11,497.26" fill="url(#b152)"/><polygon points="303.13,415.80 537.73,490.64 508.49,503.87 493.87,510.49" fill="url(#b153)"/><polygon points="303.13,415.80 508.49,503.87 479.25,517.10 464.63,523.72" fill="url(#b154)"/><polygon points="303.13,415.80 479.25,517.10 450.01,530.33 435.39,536.95" fill="url(#b155)"/><polygon points="303.13,415.80 450.01,530.33 420.78,543.56 406.16,550.17" fill="url(#b156)"/><polygon points="303.13,415.80 420.78,543.56 391.54,556.79 376.92,563.40" fill="url(#b157)"/><polygon points="303.13,415.80 391.54,556.79 362.30,570.02 347.68,576.63" fill="url(#b158)"/><polygon points="303.13,415.80 362.30,570.02 333.06,583.25 318.44,589.86" fill="url(#b159)"/><polygon points="303.13,415.80 333.06,583.25 303.82,596.48 289.20,603.09" fill="url(#b160)"/><polygon points="303.13,415.80 303.82,596.48 274.58,609.70 259.96,616.32" fill="url(#b161)"/><polygon points="303.13,415.80 274.58,609.70 245.34,622.93 230.72,629.55" fill="url(#b162)"/><polygon points="303.13,415.80 245.34,622.93 216.10,636.16 201.48,642.78" fill="url(#b163)"/><polygon points="303.13,415.80 216.10,636.16 186.86,649.39 184.39,648.25" fill="url(#b164)"/></g>
<g><polygon points="303.13,415.80 186.86,649.39 181.91,647.11" fill="url(#w0)"/><polygon points="303.13,415.80 181.91,647.11 177.91,643.58" fill="url(#w1)"/><polygon points="303.13,415.80 177.91,643.58 173.35,639.68" fill="url(#w2)"/><polygon points="303.13,415.80 173.35,639.68 169.03,635.88" fill="url(#w3)"/><polygon points="303.13,415.80 169.03,635.88 164.85,631.79" fill="url(#w4)"/><polygon points="303.13,415.80 164.85,631.79 160.03,626.31" fill="url(#w5)"/><polygon points="303.13,415.80 160.03,626.31 155.65,620.29" fill="url(#w6)"/><polygon points="303.13,415.80 155.65,620.29 152.21,614.92" fill="url(#w7)"/><polygon points="303.13,415.80 152.21,614.92 148.42,608.40" fill="url(#w8)"/><polygon points="303.13,415.80 148.42,608.40 144.29,600.58" fill="url(#w9)"/><polygon points="303.13,415.80 144.29,600.58 139.75,591.14" fill="url(#w10)"/><polygon points="303.13,415.80 139.75,591.14 137.32,585.71" fill="url(#w11)"/><polygon points="303.13,415.80 137.32,585.71 134.77,579.75" fill="url(#w12)"/><polygon points="303.13,415.80 134.77,579.75 132.11,573.24" fill="url(#w13)"/><polygon points="303.13,415.80 132.11,573.24 129.32,566.17" fill="url(#w14)"/><polygon points="303.13,415.80 129.32,566.17 126.39,558.52" fill="url(#w15)"/><polygon points="303.13,415.80 126.39,558.52 123.31,550.26" fill="url(#w16)"/><polygon points="303.13,415.80 123.31,550.26 120.10,541.33" fill="url(#w17)"/><polygon points="303.13,415.80 120.10,541.33 116.76,531.69" fill="url(#w18)"/><polygon points="303.13,415.80 116.76,531.69 113.35,521.29" fill="url(#w19)"/><polygon points="303.13,415.80 113.35,521.29 109.89,510.13" fill="url(#w20)"/><polygon points="303.13,415.80 109.89,510.13 106.45,498.22" fill="url(#w21)"/><polygon points="303.13,415.80 106.45,498.22 103.04,485.57" fill="url(#w22)"/><polygon points="303.13,415.80 103.04,485.57 99.64,472.16" fill="url(#w23)"/><polygon points="303.13,415.80 99.64,472.16 96.26,458.00" fill="url(#w24)"/><polygon points="303.13,415.80 96.26,458.00 92.87,443.08" fill="url(#w25)"/><polygon points="303.13,415.80 92.87,443.08 89.48,427.43" fill="url(#w26)"/><polygon points="303.13,415.80 89.48,427.43 86.15,411.12" fill="url(#w27)"/><polygon points="303.13,415.80 86.15,411.12 82.91,394.27" fill="url(#w28)"/><polygon points="303.13,415.80 82.91,394.27 79.80,376.96" fill="url(#w29)"/><polygon points="303.13,415.80 79.80,376.96 76.85,359.33" fill="url(#w30)"/><polygon points="303.13,415.80 76.85,359.33 74.11,341.51" fill="url(#w31)"/><polygon points="303.13,415.80 74.11,341.51 71.60,323.59" fill="url(#w32)"/><polygon points="303.13,415.80 71.60,323.59 69.35,305.62" fill="url(#w33)"/><polygon points="303.13,415.80 69.35,305.62 67.37,287.70" fill="url(#w34)"/><polygon points="303.13,415.80 67.37,287.70 65.69,269.90" fill="url(#w35)"/><polygon points="303.13,415.80 65.69,269.90 64.31,252.37" fill="url(#w36)"/><polygon points="303.13,415.80 64.31,252.37 63.28,235.26" fill="url(#w37)"/><polygon points="303.13,415.80 63.28,235.26 62.63,218.66" fill="url(#w38)"/><polygon points="303.13,415.80 62.63,218.66 62.38,202.61" fill="url(#w39)"/><polygon points="303.13,415.80 62.38,202.61 62.54,187.10" fill="url(#w40)"/><polygon points="303.13,415.80 62.54,187.10 63.11,172.10" fill="url(#w41)"/><polygon points="303.13,415.80 63.11,172.10 64.11,157.72" fill="url(#w42)"/><polygon points="303.13,415.80 64.11,157.72 65.56,144.04" fill="url(#w43)"/><polygon points="303.13,415.80 65.56,144.04 67.46,131.19" fill="url(#w44)"/><polygon points="303.13,415.80 67.46,131.19 69.85,119.26" fill="url(#w45)"/><polygon points="303.13,415.80 69.85,119.26 72.70,108.28" fill="url(#w46)"/><polygon points="303.13,415.80 72.70,108.28 75.97,98.31" fill="url(#w47)"/><polygon points="303.13,415.80 75.97,98.31 79.64,89.44" fill="url(#w48)"/><polygon points="303.13,415.80 79.64,89.44 83.69,81.74" fill="url(#w49)"/><polygon points="303.13,415.80 83.69,81.74 88.09,75.27" fill="url(#w50)"/><polygon points="303.13,415.80 88.09,75.27 92.82,70.03" fill="url(#w51)"/><polygon points="303.13,415.80 92.82,70.03 97.82,65.92" fill="url(#w52)"/><polygon points="303.13,415.80 97.82,65.92 103.04,62.89" fill="url(#w53)"/><polygon points="303.13,415.80 103.04,62.89 108.44,60.86" fill="url(#w54)"/><polygon points="303.13,415.80 108.44,60.86 113.98,59.77" fill="url(#w55)"/><polygon points="303.13,415.80 113.98,59.77 119.64,59.57" fill="url(#w56)"/><polygon points="303.13,415.80 119.64,59.57 125.40,60.14" fill="url(#w57)"/><polygon points="303.13,415.80 125.40,60.14 131.24,61.35" fill="url(#w58)"/><polygon points="303.13,415.80 131.24,61.35 137.14,63.06" fill="url(#w59)"/><polygon points="303.13,415.80 137.14,63.06 143.08,65.18" fill="url(#w60)"/><polygon points="303.13,415.80 143.08,65.18 149.06,67.62" fill="url(#w61)"/><polygon points="303.13,415.80 149.06,67.62 155.05,70.36" fill="url(#w62)"/><polygon points="303.13,415.80 155.05,70.36 161.01,73.31" fill="url(#w63)"/><polygon points="303.13,415.80 161.01,73.31 166.90,76.43" fill="url(#w64)"/><polygon points="303.13,415.80 166.90,76.43 172.70,79.65" fill="url(#w65)"/><polygon points="303.13,415.80 172.70,79.65 178.41,82.94" fill="url(#w66)"/><polygon points="303.13,415.80 178.41,82.94 184.03,86.30" fill="url(#w67)"/><polygon points="303.13,415.80 184.03,86.30 189.59,89.73" fill="url(#w68)"/><polygon points="303.13,415.80 189.59,89.73 195.10,93.26" fill="url(#w69)"/><polygon points="303.13,415.80 195.10,93.26 200.56,96.89" fill="url(#w70)"/><polygon points="303.13,415.80 200.56,96.89 205.99,100.61" fill="url(#w71)"/><polygon points="303.13,415.80 205.99,100.61 211.38,104.41" fill="url(#w72)"/><polygon points="303.13,415.80 211.38,104.41 216.74,108.29" fill="url(#w73)"/><polygon points="303.13,415.80 216.74,108.29 222.08,112.26" fill="url(#w74)"/><polygon points="303.13,415.80 222.08,112.26 227.40,116.31" fill="url(#w75)"/><polygon points="303.13,415.80 227.40,116.31 232.70,120.44" fill="url(#w76)"/><polygon points="303.13,415.80 232.70,120.44 237.99,124.64" fill="url(#w77)"/><polygon points="303.13,415.80 237.99,124.64 243.27,128.92" fill="url(#w78)"/><polygon points="303.13,415.80 243.27,128.92 248.54,133.26" fill="url(#w79)"/><polygon points="303.13,415.80 248.54,133.26 253.80,137.65" fill="url(#w80)"/><polygon points="303.13,415.80 253.80,137.65 259.04,142.11" fill="url(#w81)"/><polygon points="303.13,415.80 259.04,142.11 264.28,146.62" fill="url(#w82)"/><polygon points="303.13,415.80 264.28,146.62 269.51,151.18" fill="url(#w83)"/><polygon points="303.13,415.80 269.51,151.18 274.74,155.78" fill="url(#w84)"/><polygon points="303.13,415.80 274.74,155.78 279.96,160.43" fill="url(#w85)"/><polygon points="303.13,415.80 279.96,160.43 285.19,165.12" fill="url(#w86)"/><polygon points="303.13,415.80 285.19,165.12 290.41,169.85" fill="url(#w87)"/><polygon points="303.13,415.80 290.41,169.85 295.63,174.61" fill="url(#w88)"/><polygon points="303.13,415.80 295.63,174.61 300.85,179.41" fill="url(#w89)"/><polygon points="303.13,415.80 300.85,179.41 306.07,184.23" fill="url(#w90)"/><polygon points="303.13,415.80 306.07,184.23 311.29,189.08" fill="url(#w91)"/><polygon points="303.13,415.80 311.29,189.08 316.52,193.96" fill="url(#w92)"/><polygon points="303.13,415.80 316.52,193.96 321.74,198.86" fill="url(#w93)"/><polygon points="303.13,415.80 321.74,198.86 326.95,203.77" fill="url(#w94)"/><polygon points="303.13,415.80 326.95,203.77 332.17,208.70" fill="url(#w95)"/><polygon points="303.13,415.80 332.17,208.70 337.38,213.64" fill="url(#w96)"/><polygon points="303.13,415.80 337.38,213.64 342.59,218.60" fill="url(#w97)"/><polygon points="303.13,415.80 342.59,218.60 347.80,223.55" fill="url(#w98)"/><polygon points="303.13,415.80 347.80,223.55 353.00,228.52" fill="url(#w99)"/><polygon points="303.13,415.80 353.00,228.52 358.19,233.49" fill="url(#w100)"/><polygon points="303.13,415.80 358.19,233.49 363.37,238.46" fill="url(#w101)"/><polygon points="303.13,415.80 363.37,238.46 368.55,243.43" fill="url(#w102)"/><polygon points="303.13,415.80 368.55,243.43 373.71,248.40" fill="url(#w103)"/><polygon points="303.13,415.80 373.71,248.40 378.86,253.36" fill="url(#w104)"/><polygon points="303.13,415.80 378.86,253.36 383.99,258.31" fill="url(#w105)"/><polygon points="303.13,415.80 383.99,258.31 389.10,263.25" fill="url(#w106)"/><polygon points="303.13,415.80 389.10,263.25 394.19,268.18" fill="url(#w107)"/><polygon points="303.13,415.80 394.19,268.18 399.27,273.10" fill="url(#w108)"/><polygon points="303.13,415.80 399.27,273.10 404.31,277.99" fill="url(#w109)"/><polygon points="303.13,415.80 404.31,277.99 409.33,282.86" fill="url(#w110)"/><polygon points="303.13,415.80 409.33,282.86 414.33,287.71" fill="url(#w111)"/><polygon points="303.13,415.80 414.33,287.71 419.29,292.53" fill="url(#w112)"/><polygon points="303.13,415.80 419.29,292.53 424.21,297.31" fill="url(#w113)"/><polygon points="303.13,415.80 424.21,297.31 429.10,302.06" fill="url(#w114)"/><polygon points="303.13,415.80 429.10,302.06 433.95,306.77" fill="url(#w115)"/><polygon points="303.13,415.80 433.95,306.77 438.76,311.44" fill="url(#w116)"/><polygon points="303.13,415.80 438.76,311.44 443.53,316.07" fill="url(#w117)"/><polygon points="303.13,415.80 443.53,316.07 448.25,320.64" fill="url(#w118)"/><polygon points="303.13,415.80 448.25,320.64 452.92,325.17" fill="url(#w119)"/><polygon points="303.13,415.80 452.92,325.17 457.54,329.65" fill="url(#w120)"/><polygon points="303.13,415.80 457.54,329.65 462.10,334.07" fill="url(#w121)"/><polygon points="303.13,415.80 462.10,334.07 466.60,338.42" fill="url(#w122)"/><polygon points="303.13,415.80 466.60,338.42 471.03,342.72" fill="url(#w123)"/><polygon points="303.13,415.80 471.03,342.72 475.41,346.96" fill="url(#w124)"/><polygon points="303.13,415.80 475.41,346.96 479.71,351.13" fill="url(#w125)"/><polygon points="303.13,415.80 479.71,351.13 483.95,355.25" fill="url(#w126)"/><polygon points="303.13,415.80 483.95,355.25 488.11,359.30" fill="url(#w127)"/><polygon points="303.13,415.80 488.11,359.30 492.18,363.26" fill="url(#w128)"/><polygon points="303.13,415.80 492.18,363.26 496.15,367.12" fill="url(#w129)"/><polygon points="303.13,415.80 496.15,367.12 500.00,370.86" fill="url(#w130)"/><polygon points="303.13,415.80 500.00,370.86 507.33,377.98" fill="url(#w131)"/><polygon points="303.13,415.80 507.33,377.98 514.26,384.70" fill="url(#w132)"/><polygon points="303.13,415.80 514.26,384.70 520.87,391.12" fill="url(#w133)"/><polygon points="303.13,415.80 520.87,391.12 527.18,397.23" fill="url(#w134)"/><polygon points="303.13,415.80 527.18,397.23 533.08,402.95" fill="url(#w135)"/><polygon points="303.13,415.80 533.08,402.95 538.51,408.20" fill="url(#w136)"/><polygon points="303.13,415.80 538.51,408.20 543.52,413.03" fill="url(#w137)"/><polygon points="303.13,415.80 543.52,413.03 548.15,417.51" fill="url(#w138)"/><polygon points="303.13,415.80 548.15,417.51 552.42,421.66" fill="url(#w139)"/><polygon points="303.13,415.80 552.42,421.66 556.33,425.46" fill="url(#w140)"/><polygon points="303.13,415.80 556.33,425.46 561.57,430.56" fill="url(#w141)"/><polygon points="303.13,415.80 561.57,430.56 566.12,434.98" fill="url(#w142)"/><polygon points="303.13,415.80 566.12,434.98 570.11,438.83" fill="url(#w143)"/><polygon points="303.13,415.80 570.11,438.83 574.65,443.23" fill="url(#w144)"/><polygon points="303.13,415.80 574.65,443.23 578.55,447.01" fill="url(#w145)"/><polygon points="303.13,415.80 578.55,447.01 582.68,451.03" fill="url(#w146)"/><polygon points="303.13,415.80 582.68,451.03 586.62,454.86" fill="url(#w147)"/><polygon points="303.13,415.80 586.62,454.86 590.58,458.70" fill="url(#w148)"/><polygon points="303.13,415.80 590.58,458.70 594.46,462.49" fill="url(#w149)"/><polygon points="303.13,415.80 594.46,462.49 596.21,464.19" fill="url(#w150)"/><polygon points="303.13,415.80 596.21,464.19 566.97,477.42" fill="url(#w151)"/><polygon points="303.13,415.80 566.97,477.42 537.73,490.64" fill="url(#w152)"/><polygon points="303.13,415.80 537.73,490.64 508.49,503.87" fill="url(#w153)"/><polygon points="303.13,415.80 508.49,503.87 479.25,517.10" fill="url(#w154)"/><polygon points="303.13,415.80 479.25,517.10 450.01,530.33" fill="url(#w155)"/><polygon points="303.13,415.80 450.01,530.33 420.78,543.56" fill="url(#w156)"/><polygon points="303.13,415.80 420.78,543.56 391.54,556.79" fill="url(#w157)"/><polygon points="303.13,415.80 391.54,556.79 362.30,570.02" fill="url(#w158)"/><polygon points="303.13,415.80 362.30,570.02 333.06,583.25" fill="url(#w159)"/><polygon points="303.13,415.80 333.06,583.25 303.82,596.48" fill="url(#w160)"/><polygon points="303.13,415.80 303.82,596.48 274.58,609.70" fill="url(#w161)"/><polygon points="303.13,415.80 274.58,609.70 245.34,622.93" fill="url(#w162)"/><polygon points="303.13,415.80 245.34,622.93 216.10,636.16" fill="url(#w163)"/><polygon points="303.13,415.80 216.10,636.16 186.86,649.39" fill="url(#w164)"/></g>
<path d="M74,35 H694 V639 H74 Z M193.4,636.2 L192.4,636.3 L191.4,636.0 L190.5,635.4 L189.6,634.7 L188.8,634.0 L187.8,633.2 L186.8,632.2 L185.9,631.5 L185.0,630.7 L183.9,629.8 L182.7,628.8 L181.4,627.6 L180.0,626.4 L179.2,625.7 L178.4,625.0 L177.5,624.2 L176.6,623.4 L175.7,622.6 L174.7,621.6 L173.7,620.6 L172.7,619.6 L171.6,618.4 L170.5,617.2 L169.3,615.9 L168.1,614.4 L166.8,612.7 L165.5,610.8 L164.0,608.7 L162.4,606.3 L160.8,603.6 L159.0,600.7 L157.2,597.5 L155.3,594.0 L153.3,590.1 L151.2,585.9 L149.0,581.2 L146.7,576.1 L144.3,570.5 L141.8,564.3 L139.2,557.7 L136.4,550.4 L133.5,542.6 L130.5,534.2 L127.3,525.1 L124.1,515.3 L120.8,504.8 L117.6,493.6 L114.4,481.6 L111.2,469.0 L108.0,455.6 L104.8,441.5 L101.6,426.8 L98.4,411.4 L95.4,395.5 L92.4,379.2 L89.7,362.5 L87.1,345.7 L84.7,328.8 L82.6,311.9 L80.7,294.9 L79.1,278.2 L77.8,261.6 L76.9,245.5 L76.2,229.8 L76.0,214.7 L76.2,200.0 L76.7,185.9 L77.6,172.3 L79.0,159.4 L80.8,147.3 L83.1,136.0 L85.7,125.7 L88.8,116.3 L92.3,107.9 L96.1,100.6 L100.3,94.5 L104.7,89.6 L109.4,85.7 L114.4,82.9 L119.5,81.0 L124.7,79.9 L130.0,79.7 L135.5,80.3 L141.0,81.4 L146.5,83.0 L152.1,85.0 L157.8,87.3 L163.4,89.9 L169.1,92.7 L174.6,95.6 L180.1,98.7 L185.5,101.8 L190.8,104.9 L196.0,108.2 L201.2,111.5 L206.4,114.9 L211.5,118.4 L216.6,122.0 L221.6,125.7 L226.7,129.4 L231.7,133.3 L236.7,137.2 L241.7,141.1 L246.7,145.2 L251.6,149.2 L256.6,153.4 L261.5,157.6 L266.5,161.9 L271.4,166.2 L276.3,170.5 L281.3,174.9 L286.2,179.3 L291.1,183.8 L296.1,188.3 L301.0,192.8 L305.9,197.3 L310.8,201.9 L315.8,206.5 L320.7,211.1 L325.6,215.8 L330.5,220.4 L335.4,225.1 L340.4,229.8 L345.3,234.4 L350.2,239.1 L355.1,243.8 L360.0,248.5 L364.8,253.2 L369.7,257.9 L374.6,262.6 L379.4,267.2 L384.2,271.9 L389.0,276.5 L393.8,281.2 L398.6,285.8 L403.3,290.4 L408.0,295.0 L412.7,299.5 L417.4,304.0 L422.0,308.5 L426.5,312.9 L431.1,317.3 L435.6,321.7 L440.0,326.0 L444.4,330.3 L448.8,334.5 L453.1,338.7 L457.3,342.8 L461.5,346.9 L465.7,350.9 L469.7,354.8 L473.7,358.7 L477.6,362.5 L481.5,366.2 L485.2,369.9 L488.9,373.4 L492.4,376.8 L495.8,380.1 L499.1,383.3 L502.3,386.5 L505.5,389.5 L508.5,392.5 L511.6,395.4 L514.5,398.3 L517.3,401.0 L520.1,403.7 L522.7,406.2 L525.2,408.6 L527.6,411.0 L529.9,413.2 L532.1,415.3 L534.3,417.4 L536.3,419.4 L538.3,421.3 L540.2,423.2 L542.0,424.9 L543.7,426.6 L545.4,428.2 L546.9,429.7 L548.4,431.2 L549.9,432.6 L551.2,433.9 L552.5,435.2 L553.8,436.4 L555.0,437.5 L556.1,438.6 L557.2,439.7 L558.3,440.7 L559.3,441.7 L560.2,442.6 L561.2,443.5 L562.1,444.4 L563.0,445.2 L563.8,446.1 L564.6,446.9 L565.4,447.6 L566.1,448.3 L566.9,449.0 L568.2,450.3 L569.4,451.5 L570.6,452.6 L571.6,453.6 L572.5,454.5 L573.3,455.3 L574.3,456.3 L575.2,457.1 L575.9,457.9 L576.7,458.6 L577.5,459.4 L578.3,460.1 L579.0,460.9 L579.6,461.4Z" fill="#fff" fill-rule="evenodd"/>
</g>
<clipPath id="pc2"><rect x="73" y="35" width="621" height="605"/></clipPath>
<g clip-path="url(#pc2)" style="will-change:transform" font-family="Liberation Sans, sans-serif" font-size="12px"><path d="M78,278.5h3M79.5,277v3" stroke="#6c6e74" stroke-width="1" stroke-opacity="0.6" shape-rendering="crispEdges" fill="none"/><rect x="79" y="278" width="1" height="1" fill="#6c6e74" shape-rendering="crispEdges"/><text x="84.6" y="282.7" fill="#a8868e" textLength="32.0" lengthAdjust="spacingAndGlyphs">500nm</text><path d="M82,136.5h3M83.5,135v3" stroke="#6c6e74" stroke-width="1" stroke-opacity="0.6" shape-rendering="crispEdges" fill="none"/><rect x="83" y="136" width="1" height="1" fill="#6c6e74" shape-rendering="crispEdges"/><text x="88.6" y="140.7" fill="#9a8290" textLength="32.0" lengthAdjust="spacingAndGlyphs">510nm</text><path d="M123,79.5h3M124.5,78v3" stroke="#6c6e74" stroke-width="1" stroke-opacity="0.6" shape-rendering="crispEdges" fill="none"/><rect x="124" y="79" width="1" height="1" fill="#6c6e74" shape-rendering="crispEdges"/><text x="129.6" y="83.7" fill="#858585" textLength="32.0" lengthAdjust="spacingAndGlyphs">520nm</text><path d="M179,98.5h3M180.5,97v3" stroke="#6c6e74" stroke-width="1" stroke-opacity="0.6" shape-rendering="crispEdges" fill="none"/><rect x="180" y="98" width="1" height="1" fill="#6c6e74" shape-rendering="crispEdges"/><text x="185.6" y="102.7" fill="#858585" textLength="32.0" lengthAdjust="spacingAndGlyphs">530nm</text><path d="M230,133.5h3M231.5,132v3" stroke="#6c6e74" stroke-width="1" stroke-opacity="0.6" shape-rendering="crispEdges" fill="none"/><rect x="231" y="133" width="1" height="1" fill="#6c6e74" shape-rendering="crispEdges"/><text x="236.6" y="137.7" fill="#858585" textLength="32.0" lengthAdjust="spacingAndGlyphs">540nm</text><path d="M280,174.5h3M281.5,173v3" stroke="#6c6e74" stroke-width="1" stroke-opacity="0.6" shape-rendering="crispEdges" fill="none"/><rect x="281" y="174" width="1" height="1" fill="#6c6e74" shape-rendering="crispEdges"/><text x="286.6" y="178.7" fill="#858585" textLength="32.0" lengthAdjust="spacingAndGlyphs">550nm</text><path d="M329,220.5h3M330.5,219v3" stroke="#6c6e74" stroke-width="1" stroke-opacity="0.6" shape-rendering="crispEdges" fill="none"/><rect x="330" y="220" width="1" height="1" fill="#6c6e74" shape-rendering="crispEdges"/><text x="335.6" y="224.7" fill="#858585" textLength="32.0" lengthAdjust="spacingAndGlyphs">560nm</text><path d="M378,267.5h3M379.5,266v3" stroke="#6c6e74" stroke-width="1" stroke-opacity="0.6" shape-rendering="crispEdges" fill="none"/><rect x="379" y="267" width="1" height="1" fill="#6c6e74" shape-rendering="crispEdges"/><text x="384.6" y="271.7" fill="#858585" textLength="32.0" lengthAdjust="spacingAndGlyphs">570nm</text><path d="M425,312.5h3M426.5,311v3" stroke="#6c6e74" stroke-width="1" stroke-opacity="0.6" shape-rendering="crispEdges" fill="none"/><rect x="426" y="312" width="1" height="1" fill="#6c6e74" shape-rendering="crispEdges"/><text x="431.6" y="316.7" fill="#858585" textLength="32.0" lengthAdjust="spacingAndGlyphs">580nm</text><path d="M468,354.5h3M469.5,353v3" stroke="#6c6e74" stroke-width="1" stroke-opacity="0.6" shape-rendering="crispEdges" fill="none"/><rect x="469" y="354" width="1" height="1" fill="#6c6e74" shape-rendering="crispEdges"/><text x="474.6" y="358.7" fill="#858585" textLength="32.0" lengthAdjust="spacingAndGlyphs">590nm</text><path d="M504,389.5h3M505.5,388v3" stroke="#6c6e74" stroke-width="1" stroke-opacity="0.6" shape-rendering="crispEdges" fill="none"/><rect x="505" y="389" width="1" height="1" fill="#6c6e74" shape-rendering="crispEdges"/><text x="510.6" y="393.7" fill="#858585" textLength="32.0" lengthAdjust="spacingAndGlyphs">600nm</text><path d="M531,415.5h3M532.5,414v3" stroke="#6c6e74" stroke-width="1" stroke-opacity="0.6" shape-rendering="crispEdges" fill="none"/><rect x="532" y="415" width="1" height="1" fill="#6c6e74" shape-rendering="crispEdges"/><text x="537.6" y="419.7" fill="#858585" textLength="32.0" lengthAdjust="spacingAndGlyphs">610nm</text><path d="M548,432.5h3M549.5,431v3" stroke="#6c6e74" stroke-width="1" stroke-opacity="0.6" shape-rendering="crispEdges" fill="none"/><rect x="549" y="432" width="1" height="1" fill="#6c6e74" shape-rendering="crispEdges"/><text x="554.6" y="436.7" fill="#858585" textLength="32.0" lengthAdjust="spacingAndGlyphs">620nm</text><path d="M567,450.5h3M568.5,449v3" stroke="#6c6e74" stroke-width="1" stroke-opacity="0.6" shape-rendering="crispEdges" fill="none"/><rect x="568" y="450" width="1" height="1" fill="#6c6e74" shape-rendering="crispEdges"/><text x="573.6" y="454.7" fill="#858585" textLength="32.0" lengthAdjust="spacingAndGlyphs">640nm</text><path d="M578,461.5h3M579.5,460v3" stroke="#6c6e74" stroke-width="1" stroke-opacity="0.6" shape-rendering="crispEdges" fill="none"/><rect x="579" y="461" width="1" height="1" fill="#6c6e74" shape-rendering="crispEdges"/><text x="584.6" y="465.7" fill="#858585" textLength="32.0" lengthAdjust="spacingAndGlyphs">780nm</text><path d="M192,636.5h3M193.5,635v3" stroke="#6c6e74" stroke-width="1" stroke-opacity="0.6" shape-rendering="crispEdges" fill="none"/><rect x="193" y="636" width="1" height="1" fill="#6c6e74" shape-rendering="crispEdges"/><text x="185.9" y="640.7" fill="#858585" text-anchor="end" textLength="32.0" lengthAdjust="spacingAndGlyphs">380nm</text><path d="M180,627.5h3M181.5,626v3" stroke="#6c6e74" stroke-width="1" stroke-opacity="0.6" shape-rendering="crispEdges" fill="none"/><rect x="181" y="627" width="1" height="1" fill="#6c6e74" shape-rendering="crispEdges"/><text x="173.9" y="631.7" fill="#858585" text-anchor="end" textLength="32.0" lengthAdjust="spacingAndGlyphs">450nm</text><path d="M171,619.5h3M172.5,618v3" stroke="#6c6e74" stroke-width="1" stroke-opacity="0.6" shape-rendering="crispEdges" fill="none"/><rect x="172" y="619" width="1" height="1" fill="#6c6e74" shape-rendering="crispEdges"/><text x="164.9" y="623.7" fill="#858585" text-anchor="end" textLength="32.0" lengthAdjust="spacingAndGlyphs">460nm</text><path d="M158,600.5h3M159.5,599v3" stroke="#6c6e74" stroke-width="1" stroke-opacity="0.6" shape-rendering="crispEdges" fill="none"/><rect x="159" y="600" width="1" height="1" fill="#6c6e74" shape-rendering="crispEdges"/><text x="151.9" y="604.7" fill="#858585" text-anchor="end" textLength="32.0" lengthAdjust="spacingAndGlyphs">470nm</text><path d="M135,550.5h3M136.5,549v3" stroke="#6c6e74" stroke-width="1" stroke-opacity="0.6" shape-rendering="crispEdges" fill="none"/><rect x="136" y="550" width="1" height="1" fill="#6c6e74" shape-rendering="crispEdges"/><text x="128.9" y="554.7" fill="#858585" text-anchor="end" textLength="32.0" lengthAdjust="spacingAndGlyphs">480nm</text><path d="M103,441.5h3M104.5,440v3" stroke="#6c6e74" stroke-width="1" stroke-opacity="0.6" shape-rendering="crispEdges" fill="none"/><rect x="104" y="441" width="1" height="1" fill="#6c6e74" shape-rendering="crispEdges"/><text x="96.9" y="445.7" fill="#858585" text-anchor="end" textLength="32.0" lengthAdjust="spacingAndGlyphs">490nm</text><path d="M302,415.5h3M303.5,414v3" stroke="#6c6e74" stroke-width="1" stroke-opacity="0.6" shape-rendering="crispEdges" fill="none"/><rect x="303" y="415" width="1" height="1" fill="#6c6e74" shape-rendering="crispEdges"/><text x="308.8" y="419.7" fill="#858585" textLength="75.3" lengthAdjust="spacingAndGlyphs">CIE White Point</text></g>
<g shape-rendering="crispEdges"><rect x="142" y="35" width="1" height="605" fill="#989800"/><rect x="211" y="35" width="1" height="605" fill="#989800"/><rect x="280" y="35" width="1" height="605" fill="#989800"/><rect x="349" y="35" width="1" height="605" fill="#989800"/><rect x="417" y="35" width="1" height="605" fill="#989800"/><rect x="486" y="35" width="1" height="605" fill="#989800"/><rect x="555" y="35" width="1" height="605" fill="#989800"/><rect x="624" y="35" width="1" height="605" fill="#989800"/><rect x="73" y="605" width="621" height="1" fill="#989800"/><rect x="73" y="572" width="621" height="1" fill="#989800"/><rect x="73" y="538" width="621" height="1" fill="#989800"/><rect x="73" y="505" width="621" height="1" fill="#989800"/><rect x="73" y="471" width="621" height="1" fill="#989800"/><rect x="73" y="438" width="621" height="1" fill="#989800"/><rect x="73" y="404" width="621" height="1" fill="#989800"/><rect x="73" y="371" width="621" height="1" fill="#989800"/><rect x="73" y="337" width="621" height="1" fill="#989800"/><rect x="73" y="303" width="621" height="1" fill="#989800"/><rect x="73" y="270" width="621" height="1" fill="#989800"/><rect x="73" y="236" width="621" height="1" fill="#989800"/><rect x="73" y="203" width="621" height="1" fill="#989800"/><rect x="73" y="169" width="621" height="1" fill="#989800"/><rect x="73" y="136" width="621" height="1" fill="#989800"/><rect x="73" y="102" width="621" height="1" fill="#989800"/><rect x="73" y="69" width="621" height="1" fill="#989800"/></g>
<polyline fill="none" stroke="#7a7c80" stroke-width="0.9" points="547.9,430.9 544.1,427.3 540.1,423.6 535.9,419.7 531.5,415.7 526.8,411.5 522.0,407.3 517.0,403.1 511.7,398.8 506.3,394.5 500.6,390.3 494.7,386.2 488.6,382.3 482.3,378.6 475.8,375.1 469.1,371.9 462.2,369.0 455.1,366.5 447.8,364.4 440.3,362.8 432.8,361.7 425.1,361.0 417.4,360.8 409.6,361.1 401.8,361.9 394.1,363.2 386.4,364.8 378.9,366.9 371.5,369.4 364.2,372.1 357.2,375.2 350.3,378.5 343.8,381.9 337.4,385.5 331.4,389.3 325.6,393.1 320.1,396.9 314.9,400.7 309.9,404.5 305.3,408.3 300.9,412.0 296.8,415.6 292.9,419.1 289.3,422.5 285.9,425.8 282.7,428.9 279.8,431.9 277.0,434.8 274.5,437.5 272.1,440.1 269.9,442.6 267.8,444.9 265.9,447.1 264.1,449.2 262.4,451.2 260.9,453.0 259.5,454.7 258.1,456.4 256.9,457.9 255.8,459.4 254.7,460.7 253.7,462.0 252.8,463.2 251.9,464.3 251.1,465.4 250.4,466.3 249.7,467.3 249.0,468.1 248.4,469.0 247.8,469.7 247.3,470.4 246.8,471.1 246.3,471.8 245.9,472.3 245.5,472.9 245.1,473.4 244.8,473.9 244.4,474.4 244.1,474.8 243.8,475.3 243.5,475.6"/>
<g shape-rendering="crispEdges"><polygon fill="none" stroke="#000" stroke-width="1" points="376.5,349.5 417.5,344.5 417.5,383.5 376.5,383.5"/><polygon fill="none" stroke="#000" stroke-width="1" points="280.5,409.5 376.5,349.5 376.5,383.5 280.5,454.5"/><rect x="375" y="348" width="3" height="3" fill="#000"/><rect x="416" y="343" width="3" height="3" fill="#000"/><rect x="416" y="382" width="3" height="3" fill="#000"/><rect x="375" y="382" width="3" height="3" fill="#000"/><rect x="279" y="408" width="3" height="3" fill="#000"/><rect x="279" y="453" width="3" height="3" fill="#000"/></g>
<g shape-rendering="crispEdges"><rect x="369" y="35" width="1" height="605" fill="#ff0000"/><rect x="73" y="377" width="621" height="1" fill="#ff0000"/></g>
<circle cx="369.5" cy="377.5" r="2.6" fill="#ff0000"/>
<g shape-rendering="crispEdges"><rect x="73" y="641" width="1" height="5" fill="#000"/><rect x="66" y="639" width="5" height="1" fill="#000"/><rect x="142" y="641" width="1" height="5" fill="#000"/><rect x="66" y="572" width="5" height="1" fill="#000"/><rect x="211" y="641" width="1" height="5" fill="#000"/><rect x="66" y="505" width="5" height="1" fill="#000"/><rect x="280" y="641" width="1" height="5" fill="#000"/><rect x="66" y="438" width="5" height="1" fill="#000"/><rect x="349" y="641" width="1" height="5" fill="#000"/><rect x="66" y="371" width="5" height="1" fill="#000"/><rect x="417" y="641" width="1" height="5" fill="#000"/><rect x="66" y="303" width="5" height="1" fill="#000"/><rect x="486" y="641" width="1" height="5" fill="#000"/><rect x="66" y="236" width="5" height="1" fill="#000"/><rect x="555" y="641" width="1" height="5" fill="#000"/><rect x="66" y="169" width="5" height="1" fill="#000"/><rect x="624" y="641" width="1" height="5" fill="#000"/><rect x="66" y="102" width="5" height="1" fill="#000"/><rect x="693" y="641" width="1" height="5" fill="#000"/><rect x="66" y="35" width="5" height="1" fill="#000"/></g>
<g style="will-change:transform" font-family="Liberation Sans, sans-serif" font-size="11px" fill="#000" stroke="#000" stroke-width="0.35"><text x="72.0" y="656.9" text-anchor="middle" textLength="32.6" lengthAdjust="spacingAndGlyphs">0.0000</text><text x="63.2" y="643.4" text-anchor="end" textLength="32.6" lengthAdjust="spacingAndGlyphs">0.0000</text><text x="141.0" y="656.9" text-anchor="middle" textLength="32.6" lengthAdjust="spacingAndGlyphs">0.1000</text><text x="63.2" y="576.4" text-anchor="end" textLength="32.6" lengthAdjust="spacingAndGlyphs">0.1000</text><text x="210.0" y="656.9" text-anchor="middle" textLength="32.6" lengthAdjust="spacingAndGlyphs">0.2000</text><text x="63.2" y="509.4" text-anchor="end" textLength="32.6" lengthAdjust="spacingAndGlyphs">0.2000</text><text x="279.0" y="656.9" text-anchor="middle" textLength="32.6" lengthAdjust="spacingAndGlyphs">0.3000</text><text x="63.2" y="442.4" text-anchor="end" textLength="32.6" lengthAdjust="spacingAndGlyphs">0.3000</text><text x="348.0" y="656.9" text-anchor="middle" textLength="32.6" lengthAdjust="spacingAndGlyphs">0.4000</text><text x="63.2" y="375.4" text-anchor="end" textLength="32.6" lengthAdjust="spacingAndGlyphs">0.4000</text><text x="416.0" y="656.9" text-anchor="middle" textLength="32.6" lengthAdjust="spacingAndGlyphs">0.5000</text><text x="63.2" y="307.4" text-anchor="end" textLength="32.6" lengthAdjust="spacingAndGlyphs">0.5000</text><text x="485.0" y="656.9" text-anchor="middle" textLength="32.6" lengthAdjust="spacingAndGlyphs">0.6000</text><text x="63.2" y="240.4" text-anchor="end" textLength="32.6" lengthAdjust="spacingAndGlyphs">0.6000</text><text x="554.0" y="656.9" text-anchor="middle" textLength="32.6" lengthAdjust="spacingAndGlyphs">0.7000</text><text x="63.2" y="173.4" text-anchor="end" textLength="32.6" lengthAdjust="spacingAndGlyphs">0.7000</text><text x="623.0" y="656.9" text-anchor="middle" textLength="32.6" lengthAdjust="spacingAndGlyphs">0.8000</text><text x="63.2" y="106.4" text-anchor="end" textLength="32.6" lengthAdjust="spacingAndGlyphs">0.8000</text><text x="692.0" y="656.9" text-anchor="middle" textLength="32.6" lengthAdjust="spacingAndGlyphs">0.9000</text><text x="63.2" y="39.4" text-anchor="end" textLength="32.6" lengthAdjust="spacingAndGlyphs">0.9000</text><text x="383.5" y="675.8" text-anchor="middle">x</text><text transform="translate(23.5,339.5) rotate(-90)" text-anchor="middle">y</text></g>
<text style="will-change:transform" x="4.3" y="12.7" font-family="Liberation Sans, sans-serif" font-size="12px" fill="#000">Chromaticity</text>
</svg>
</body></html>
